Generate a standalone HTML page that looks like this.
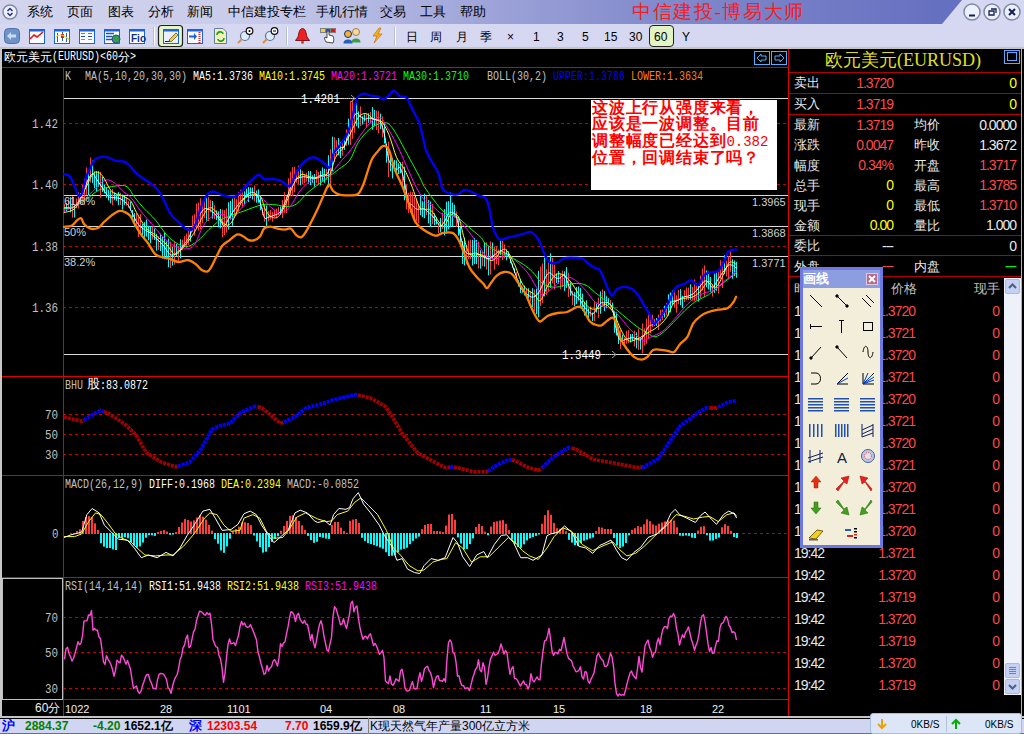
<!DOCTYPE html><html><head><meta charset="utf-8"><style>*{margin:0;padding:0;box-sizing:border-box}
html,body{width:1024px;height:734px;overflow:hidden;background:#000;font-family:"Liberation Sans",sans-serif;position:relative}
.a{position:absolute}
.t{position:absolute;white-space:nowrap;line-height:1}
#title{left:0;top:0;width:1024px;height:24px;background:linear-gradient(90deg,#d3d5ee 0px,#c8cbea 250px,#a4aadc 450px,#838bcc 650px,#6670c0 940px)}
#tb{left:0;top:24px;width:1024px;height:23px;background:#d6d8f2}
#sep{left:0;top:47px;width:1024px;height:2px;background:#c4c4c4}
.mn{top:5px;font-size:13px;color:#000}
.tf{top:31px;font-size:12px;color:#000}
.m{font-family:"Liberation Mono",monospace;font-size:12px;transform:scaleX(0.833);transform-origin:0 0}
.g{color:#c0c0c0}
.w{color:#fff}
.y{color:#ffff00}
.mg{color:#ff00ff}
.gr{color:#00ff00}
.bl{color:#0000ff}
.or{color:#ff8000}
.lab{font-size:11px;color:#c8c8c8;text-align:right}
.rp{font-size:13px}
#status{left:0;top:719px;width:1024px;height:14px;background:#d0d6f2}
</style></head><body>
<div id="title" class="a"></div>
<svg class="a" style="left:0;top:0" width="1024" height="24">
<polygon points="942,24 962,0 1024,0 1024,24" fill="#d6d8f2"/>
</svg>
<div id="tb" class="a"></div>
<div id="sep" class="a"></div>
<span class="t mn" style="left:27px">系统</span>
<span class="t mn" style="left:67px">页面</span>
<span class="t mn" style="left:108px">图表</span>
<span class="t mn" style="left:148px">分析</span>
<span class="t mn" style="left:187px">新闻</span>
<span class="t mn" style="left:228px">中信建投专栏</span>
<span class="t mn" style="left:316px">手机行情</span>
<span class="t mn" style="left:380px">交易</span>
<span class="t mn" style="left:420px">工具</span>
<span class="t mn" style="left:460px">帮助</span>
<span class="t" style="left:632px;top:2px;font-size:19px;letter-spacing:1.6px;color:#f02020;font-family:'Liberation Serif',serif">中信建投-博易大师</span>
<span class="t tf" style="left:406px">日</span>
<span class="t tf" style="left:430px">周</span>
<span class="t tf" style="left:456px">月</span>
<span class="t tf" style="left:480px">季</span>
<span class="t tf" style="left:507px">×</span>
<div class="a" style="left:649px;top:25px;width:25px;height:22px;border:1px solid #202020;border-radius:4px;background:#e2f4c4"></div>
<span class="t tf" style="left:533px">1</span>
<span class="t tf" style="left:557px">3</span>
<span class="t tf" style="left:582px">5</span>
<span class="t tf" style="left:604px">15</span>
<span class="t tf" style="left:629px">30</span>
<span class="t tf" style="left:654px">60</span>
<span class="t tf" style="left:682px">Y</span>

<svg class="a" style="left:0;top:0" width="1024" height="48">
<!-- menu circle -->
<circle cx="10" cy="12" r="7" fill="#eef0fa" stroke="#8088a8" stroke-width="1.5"/>
<path d="M7.5,11 L10,8.5 L12.5,11 M7.5,13 L10,15.5 L12.5,13" fill="none" stroke="#203080" stroke-width="1.5"/>
<!-- window buttons -->
<g stroke="#8088a8" stroke-width="1.5" fill="#eef0fc">
<circle cx="972" cy="12" r="8"/><circle cx="992" cy="12" r="8"/><circle cx="1012" cy="12" r="8"/>
</g>
<path d="M969,15.5 L975,15.5" stroke="#102050" stroke-width="2"/>
<path d="M989,11 h5 v4 h-5 z M991,9 h5 v4" fill="none" stroke="#102050" stroke-width="1.3"/>
<path d="M1009,9 L1015,15 M1015,9 L1009,15" stroke="#102050" stroke-width="2"/>
<!-- 1 back -->
<rect x="4.5" y="28.5" width="15" height="15" rx="4" fill="#6f93c8" stroke="#5070a8"/>
<path d="M7,36 L11,32 L11,34.5 L16,34.5 L16,37.5 L11,37.5 L11,40 Z" fill="#c8dcf4"/>
<!-- 2 chart -->
<rect x="29.5" y="29.5" width="15" height="14" fill="#fafcff" stroke="#1a64d8"/>
<rect x="29.5" y="29.5" width="15" height="2" fill="#1a64d8"/>
<path d="M30,39 L34,35 L37,37 L43,32" fill="none" stroke="#f01010" stroke-width="1.6"/>
<!-- 3 candle -->
<rect x="54.5" y="29.5" width="15" height="14" fill="#fafcff" stroke="#1a64d8"/>
<rect x="54.5" y="29.5" width="15" height="2" fill="#1a64d8"/>
<path d="M57.5,33 v9 M62.5,32 v9 M66.5,33 v9" stroke="#2060b0"/>
<rect x="61" y="34" width="3" height="4" fill="#f01010"/>
<path d="M55,38 C58,34 62,35 64,36 C66,37 68,38 69,40" fill="none" stroke="#f0e000" stroke-width="1.2"/>
<!-- 4 list -->
<rect x="79.5" y="29.5" width="15" height="14" fill="#fafcff" stroke="#1a64d8"/>
<rect x="79.5" y="29.5" width="15" height="2" fill="#1a64d8"/>
<path d="M81,33.5 h4 M88,33.5 h4" stroke="#40a040" stroke-width="1"/>
<path d="M81,36.5 h4 M88,36.5 h4" stroke="#2050b0" stroke-width="1"/>
<path d="M81,39.5 h4 M88,39.5 h4" stroke="#f07020" stroke-width="1"/>
<!-- 5 globe list -->
<rect x="104.5" y="29.5" width="15" height="14" fill="#fafcff" stroke="#1a64d8"/>
<rect x="104.5" y="29.5" width="15" height="2" fill="#1a64d8"/>
<path d="M106,33.5 h8 M106,36.5 h6 M106,39.5 h6" stroke="#2050b0" stroke-width="1.5"/>
<circle cx="116" cy="39" r="4" fill="#30a050" stroke="#205090"/>
<!-- 6 Fio -->
<rect x="129.5" y="29.5" width="15" height="14" fill="#fafcff" stroke="#1a64d8"/>
<rect x="129.5" y="29.5" width="15" height="2" fill="#1a64d8"/>
<text x="131" y="41.5" font-size="10" font-weight="bold" font-family="Liberation Sans" fill="#103080">Fio</text>
<!-- sep -->
<line x1="154.5" y1="27" x2="154.5" y2="45" stroke="#fff"/>
<line x1="153.5" y1="27" x2="153.5" y2="45" stroke="#b8bcd0"/>
<!-- 7 pencil selected -->
<rect x="158.5" y="25.5" width="24" height="21" rx="3" fill="#e2f6c8" stroke="#202020" stroke-width="1.2"/>
<rect x="163.5" y="29.5" width="15" height="14" fill="#e8f0ff" stroke="#1a64d8"/>
<rect x="163.5" y="29.5" width="15" height="2" fill="#1a64d8"/>
<path d="M165,41.5 L169,41.5 L176,34" fill="none" stroke="#102060" stroke-width="1.2"/>
<path d="M169,40 L176,33 L178,35 L171,42 Z" fill="#f0d040" stroke="#503000" stroke-width="0.6"/>
<!-- 8 arrow list -->
<rect x="187.5" y="29.5" width="15" height="14" fill="#fafcff" stroke="#1a64d8"/>
<rect x="187.5" y="29.5" width="15" height="2" fill="#1a64d8"/>
<path d="M189,36.5 h6" stroke="#1a64d8" stroke-width="2"/><path d="M194,33 L197,36.5 L194,40 Z" fill="#1a64d8"/>
<path d="M199.5,32 v11" stroke="#f02020" stroke-width="2" stroke-dasharray="1,1"/>
<!-- 9 doc refresh -->
<path d="M214.5,28.5 L223,28.5 L226.5,32 L226.5,43.5 L214.5,43.5 Z" fill="#f4f0b8" stroke="#6080a0"/>
<path d="M217,35 C217,31 223,31 223,34 M224,38 C224,42 218,42 218,39" fill="none" stroke="#20a020" stroke-width="1.6"/>
<!-- 10 zoom in -->
<circle cx="245" cy="36" r="4.5" fill="#d8ecff" stroke="#607080" stroke-width="1.2"/>
<path d="M241.5,39.5 L238,43" stroke="#e09040" stroke-width="2.2"/>
<circle cx="249.5" cy="31" r="3.3" fill="#fff" stroke="#101010" stroke-width="1.2"/>
<circle cx="249.5" cy="31" r="1" fill="#000"/>
<!-- 11 zoom out -->
<circle cx="270" cy="36" r="4.5" fill="#d8ecff" stroke="#607080" stroke-width="1.2"/>
<path d="M266.5,39.5 L263,43" stroke="#e09040" stroke-width="2.2"/>
<circle cx="274.5" cy="31" r="3.3" fill="#fff" stroke="#101010" stroke-width="1.2"/>
<path d="M273,31 h3" stroke="#000"/>
<!-- sep -->
<line x1="287.5" y1="27" x2="287.5" y2="45" stroke="#fff"/>
<line x1="286.5" y1="27" x2="286.5" y2="45" stroke="#b8bcd0"/>
<!-- 12 bell -->
<path d="M302.5,28.5 C299,29 299,33 298,37 L295.5,40.5 L309.5,40.5 L307,37 C306,33 306,29 302.5,28.5 Z" fill="#f02020" stroke="#600000" stroke-width="0.8"/>
<circle cx="302.5" cy="42.3" r="1.5" fill="#e03030"/>
<!-- 13 hand -->
<rect x="320" y="28" width="16" height="5" fill="#808080"/>
<rect x="321" y="29" width="4" height="3" fill="#f0d040"/><rect x="326" y="29" width="4" height="3" fill="#2060c0"/><rect x="331" y="29" width="4" height="3" fill="#f01010"/>
<path d="M327,31 L327,38 L325,37 C324,38 325,40 326,42 L333,43 C334,41 334,38 333,36 L329,35 L329,31 Z" fill="#fff" stroke="#202020" stroke-width="0.8"/>
<!-- 14 people -->
<circle cx="348" cy="34" r="3.5" fill="#f0b040" stroke="#203060"/>
<path d="M343.5,43.5 C343,38 353,38 352.5,43.5 Z" fill="#2060c0"/>
<circle cx="356" cy="32" r="3.5" fill="#f8d8a0" stroke="#a08040"/>
<path d="M351.5,42.5 C351,37 361,37 360.5,42.5 Z" fill="#40a040"/>
<!-- 15 lightning -->
<path d="M379,28 L373,36 L377,36 L374,43 L382,34 L378,34 L381,28 Z" fill="#f8b010" stroke="#c06000" stroke-width="0.6"/>
<!-- sep -->
<line x1="395.5" y1="27" x2="395.5" y2="45" stroke="#fff"/>
<line x1="394.5" y1="27" x2="394.5" y2="45" stroke="#b8bcd0"/>
</svg>

<svg class="a" style="left:0;top:48px" width="1024" height="668" viewBox="0 48 1024 668"><line x1="2" y1="67.5" x2="788" y2="67.5" stroke="#e00000" stroke-width="1"/><line x1="2" y1="376.5" x2="788" y2="376.5" stroke="#e00000" stroke-width="1"/><line x1="2" y1="475.5" x2="788" y2="475.5" stroke="#e00000" stroke-width="1"/><line x1="2" y1="577.5" x2="788" y2="577.5" stroke="#e00000" stroke-width="1"/><line x1="2" y1="699.5" x2="788" y2="699.5" stroke="#e00000" stroke-width="1"/><line x1="63.5" y1="67" x2="63.5" y2="716" stroke="#e00000" stroke-width="1"/><line x1="788.5" y1="49" x2="788.5" y2="716" stroke="#e00000" stroke-width="1"/><line x1="64" y1="123.5" x2="788" y2="123.5" stroke="#c80000" stroke-width="1" stroke-dasharray="3,3" stroke-dashoffset="1"/><line x1="64" y1="184.5" x2="788" y2="184.5" stroke="#c80000" stroke-width="1" stroke-dasharray="3,3" stroke-dashoffset="1"/><line x1="64" y1="246.5" x2="788" y2="246.5" stroke="#c80000" stroke-width="1" stroke-dasharray="3,3" stroke-dashoffset="1"/><line x1="64" y1="307.5" x2="788" y2="307.5" stroke="#c80000" stroke-width="1" stroke-dasharray="3,3" stroke-dashoffset="1"/><line x1="64" y1="98.5" x2="788" y2="98.5" stroke="#d8d8d8" stroke-width="1"/><line x1="64" y1="195.5" x2="788" y2="195.5" stroke="#d8d8d8" stroke-width="1"/><line x1="64" y1="226.5" x2="788" y2="226.5" stroke="#d8d8d8" stroke-width="1"/><line x1="64" y1="256.5" x2="788" y2="256.5" stroke="#d8d8d8" stroke-width="1"/><line x1="64" y1="354.5" x2="788" y2="354.5" stroke="#d8d8d8" stroke-width="1"/><line x1="64" y1="414.5" x2="788" y2="414.5" stroke="#c80000" stroke-width="1" stroke-dasharray="3,3" stroke-dashoffset="1"/><line x1="64" y1="434.5" x2="788" y2="434.5" stroke="#c80000" stroke-width="1" stroke-dasharray="3,3" stroke-dashoffset="1"/><line x1="64" y1="454.5" x2="788" y2="454.5" stroke="#c80000" stroke-width="1" stroke-dasharray="3,3" stroke-dashoffset="1"/><line x1="736" y1="533.5" x2="788" y2="533.5" stroke="#c80000" stroke-width="1" stroke-dasharray="3,3"/><line x1="64" y1="617.5" x2="788" y2="617.5" stroke="#c80000" stroke-width="1" stroke-dasharray="3,3" stroke-dashoffset="1"/><line x1="64" y1="652.5" x2="788" y2="652.5" stroke="#c80000" stroke-width="1" stroke-dasharray="3,3" stroke-dashoffset="1"/><line x1="64" y1="688.5" x2="788" y2="688.5" stroke="#c80000" stroke-width="1" stroke-dasharray="3,3" stroke-dashoffset="1"/><g stroke-width="1"><line x1="64.5" y1="203.9" x2="64.5" y2="212.9" stroke="#ff3c3c"/><line x1="66.5" y1="202.9" x2="66.5" y2="211.2" stroke="#00ffff"/><line x1="68.5" y1="199.2" x2="68.5" y2="209.3" stroke="#ff3c3c"/><line x1="70.5" y1="197.1" x2="70.5" y2="212.3" stroke="#00ffff"/><line x1="72.5" y1="196.3" x2="72.5" y2="217.7" stroke="#ff3c3c"/><line x1="74.5" y1="204.9" x2="74.5" y2="217.5" stroke="#00ffff"/><line x1="76.5" y1="198.4" x2="76.5" y2="208.2" stroke="#ff3c3c"/><line x1="78.5" y1="192.4" x2="78.5" y2="208.5" stroke="#ff3c3c"/><line x1="80.5" y1="193.1" x2="80.5" y2="203.0" stroke="#00ffff"/><line x1="82.5" y1="184.9" x2="82.5" y2="204.1" stroke="#ff3c3c"/><line x1="84.5" y1="178.7" x2="84.5" y2="204.8" stroke="#ff3c3c"/><line x1="86.5" y1="167.5" x2="86.5" y2="194.9" stroke="#ff3c3c"/><line x1="88.5" y1="170.6" x2="88.5" y2="196.1" stroke="#00ffff"/><line x1="90.5" y1="157.5" x2="90.5" y2="182.5" stroke="#ff3c3c"/><line x1="92.5" y1="160.6" x2="92.5" y2="183.1" stroke="#00ffff"/><line x1="94.5" y1="171.5" x2="94.5" y2="188.2" stroke="#00ffff"/><line x1="96.5" y1="171.1" x2="96.5" y2="191.4" stroke="#00ffff"/><line x1="98.5" y1="171.1" x2="98.5" y2="186.7" stroke="#00ffff"/><line x1="100.5" y1="171.9" x2="100.5" y2="197.8" stroke="#ff3c3c"/><line x1="102.5" y1="177.0" x2="102.5" y2="192.1" stroke="#00ffff"/><line x1="104.5" y1="184.5" x2="104.5" y2="193.4" stroke="#00ffff"/><line x1="106.5" y1="187.3" x2="106.5" y2="197.9" stroke="#00ffff"/><line x1="108.5" y1="189.8" x2="108.5" y2="200.5" stroke="#00ffff"/><line x1="110.5" y1="190.8" x2="110.5" y2="203.3" stroke="#00ffff"/><line x1="112.5" y1="189.0" x2="112.5" y2="205.4" stroke="#ff3c3c"/><line x1="114.5" y1="192.4" x2="114.5" y2="200.4" stroke="#00ffff"/><line x1="116.5" y1="194.3" x2="116.5" y2="200.8" stroke="#00ffff"/><line x1="118.5" y1="192.1" x2="118.5" y2="205.2" stroke="#00ffff"/><line x1="120.5" y1="192.9" x2="120.5" y2="205.0" stroke="#ff3c3c"/><line x1="122.5" y1="194.5" x2="122.5" y2="209.7" stroke="#00ffff"/><line x1="124.5" y1="195.6" x2="124.5" y2="204.9" stroke="#00ffff"/><line x1="126.5" y1="197.2" x2="126.5" y2="205.7" stroke="#ff3c3c"/><line x1="128.5" y1="201.2" x2="128.5" y2="207.8" stroke="#ff3c3c"/><line x1="130.5" y1="201.9" x2="130.5" y2="210.6" stroke="#00ffff"/><line x1="132.5" y1="210.0" x2="132.5" y2="219.3" stroke="#00ffff"/><line x1="134.5" y1="213.0" x2="134.5" y2="227.1" stroke="#00ffff"/><line x1="136.5" y1="213.4" x2="136.5" y2="226.2" stroke="#ff3c3c"/><line x1="138.5" y1="216.7" x2="138.5" y2="237.0" stroke="#ff3c3c"/><line x1="140.5" y1="213.9" x2="140.5" y2="233.2" stroke="#ff3c3c"/><line x1="142.5" y1="224.1" x2="142.5" y2="237.5" stroke="#00ffff"/><line x1="144.5" y1="222.1" x2="144.5" y2="237.8" stroke="#00ffff"/><line x1="146.5" y1="219.5" x2="146.5" y2="236.6" stroke="#00ffff"/><line x1="148.5" y1="225.9" x2="148.5" y2="240.3" stroke="#00ffff"/><line x1="150.5" y1="226.1" x2="150.5" y2="243.4" stroke="#00ffff"/><line x1="152.5" y1="226.4" x2="152.5" y2="239.6" stroke="#ff3c3c"/><line x1="154.5" y1="228.5" x2="154.5" y2="240.0" stroke="#00ffff"/><line x1="156.5" y1="233.9" x2="156.5" y2="250.6" stroke="#00ffff"/><line x1="158.5" y1="236.1" x2="158.5" y2="249.9" stroke="#ff3c3c"/><line x1="160.5" y1="233.7" x2="160.5" y2="251.1" stroke="#00ffff"/><line x1="162.5" y1="237.0" x2="162.5" y2="258.5" stroke="#00ffff"/><line x1="164.5" y1="232.5" x2="164.5" y2="259.2" stroke="#00ffff"/><line x1="166.5" y1="241.4" x2="166.5" y2="259.3" stroke="#00ffff"/><line x1="168.5" y1="238.6" x2="168.5" y2="267.3" stroke="#00ffff"/><line x1="170.5" y1="241.6" x2="170.5" y2="267.9" stroke="#ff3c3c"/><line x1="172.5" y1="246.8" x2="172.5" y2="265.6" stroke="#00ffff"/><line x1="174.5" y1="242.0" x2="174.5" y2="264.5" stroke="#ff3c3c"/><line x1="176.5" y1="243.8" x2="176.5" y2="256.8" stroke="#00ffff"/><line x1="178.5" y1="246.1" x2="178.5" y2="261.6" stroke="#ff3c3c"/><line x1="180.5" y1="239.3" x2="180.5" y2="258.4" stroke="#00ffff"/><line x1="182.5" y1="239.7" x2="182.5" y2="250.3" stroke="#ff3c3c"/><line x1="184.5" y1="236.1" x2="184.5" y2="246.8" stroke="#ff3c3c"/><line x1="186.5" y1="233.5" x2="186.5" y2="247.8" stroke="#ff3c3c"/><line x1="188.5" y1="227.7" x2="188.5" y2="244.8" stroke="#ff3c3c"/><line x1="190.5" y1="229.5" x2="190.5" y2="241.7" stroke="#00ffff"/><line x1="192.5" y1="215.5" x2="192.5" y2="231.8" stroke="#ff3c3c"/><line x1="194.5" y1="214.2" x2="194.5" y2="235.7" stroke="#ff3c3c"/><line x1="196.5" y1="203.6" x2="196.5" y2="227.9" stroke="#ff3c3c"/><line x1="198.5" y1="202.7" x2="198.5" y2="230.7" stroke="#ff3c3c"/><line x1="200.5" y1="198.3" x2="200.5" y2="229.2" stroke="#ff3c3c"/><line x1="202.5" y1="201.0" x2="202.5" y2="223.3" stroke="#ff3c3c"/><line x1="204.5" y1="198.5" x2="204.5" y2="218.1" stroke="#ff3c3c"/><line x1="206.5" y1="197.1" x2="206.5" y2="220.6" stroke="#00ffff"/><line x1="208.5" y1="197.1" x2="208.5" y2="221.1" stroke="#ff3c3c"/><line x1="210.5" y1="200.2" x2="210.5" y2="212.3" stroke="#ff3c3c"/><line x1="212.5" y1="201.0" x2="212.5" y2="218.7" stroke="#00ffff"/><line x1="214.5" y1="205.1" x2="214.5" y2="219.0" stroke="#ff3c3c"/><line x1="216.5" y1="210.4" x2="216.5" y2="220.1" stroke="#00ffff"/><line x1="218.5" y1="211.3" x2="218.5" y2="227.4" stroke="#00ffff"/><line x1="220.5" y1="209.0" x2="220.5" y2="228.4" stroke="#00ffff"/><line x1="222.5" y1="209.4" x2="222.5" y2="237.0" stroke="#ff3c3c"/><line x1="224.5" y1="210.2" x2="224.5" y2="235.2" stroke="#ff3c3c"/><line x1="226.5" y1="208.3" x2="226.5" y2="232.6" stroke="#ff3c3c"/><line x1="228.5" y1="202.3" x2="228.5" y2="229.6" stroke="#00ffff"/><line x1="230.5" y1="200.8" x2="230.5" y2="219.7" stroke="#00ffff"/><line x1="232.5" y1="198.6" x2="232.5" y2="225.8" stroke="#00ffff"/><line x1="234.5" y1="196.4" x2="234.5" y2="217.8" stroke="#ff3c3c"/><line x1="236.5" y1="199.1" x2="236.5" y2="215.4" stroke="#ff3c3c"/><line x1="238.5" y1="191.9" x2="238.5" y2="211.6" stroke="#ff3c3c"/><line x1="240.5" y1="189.7" x2="240.5" y2="203.6" stroke="#ff3c3c"/><line x1="242.5" y1="192.4" x2="242.5" y2="207.4" stroke="#ff3c3c"/><line x1="244.5" y1="191.4" x2="244.5" y2="204.1" stroke="#00ffff"/><line x1="246.5" y1="188.6" x2="246.5" y2="197.4" stroke="#00ffff"/><line x1="248.5" y1="187.1" x2="248.5" y2="202.1" stroke="#00ffff"/><line x1="250.5" y1="187.4" x2="250.5" y2="198.0" stroke="#00ffff"/><line x1="252.5" y1="187.6" x2="252.5" y2="199.5" stroke="#00ffff"/><line x1="254.5" y1="185.6" x2="254.5" y2="201.5" stroke="#ff3c3c"/><line x1="256.5" y1="190.5" x2="256.5" y2="202.6" stroke="#00ffff"/><line x1="258.5" y1="189.4" x2="258.5" y2="202.8" stroke="#00ffff"/><line x1="260.5" y1="195.2" x2="260.5" y2="210.2" stroke="#00ffff"/><line x1="262.5" y1="207.5" x2="262.5" y2="215.2" stroke="#ff3c3c"/><line x1="264.5" y1="204.6" x2="264.5" y2="221.6" stroke="#ff3c3c"/><line x1="266.5" y1="205.6" x2="266.5" y2="226.2" stroke="#00ffff"/><line x1="268.5" y1="211.0" x2="268.5" y2="221.4" stroke="#ff3c3c"/><line x1="270.5" y1="210.0" x2="270.5" y2="219.6" stroke="#ff3c3c"/><line x1="272.5" y1="212.0" x2="272.5" y2="221.7" stroke="#ff3c3c"/><line x1="274.5" y1="209.6" x2="274.5" y2="217.0" stroke="#ff3c3c"/><line x1="276.5" y1="208.6" x2="276.5" y2="218.3" stroke="#ff3c3c"/><line x1="278.5" y1="207.2" x2="278.5" y2="215.0" stroke="#ff3c3c"/><line x1="280.5" y1="206.4" x2="280.5" y2="214.8" stroke="#00ffff"/><line x1="282.5" y1="200.1" x2="282.5" y2="218.0" stroke="#ff3c3c"/><line x1="284.5" y1="192.2" x2="284.5" y2="212.9" stroke="#ff3c3c"/><line x1="286.5" y1="196.4" x2="286.5" y2="213.0" stroke="#ff3c3c"/><line x1="288.5" y1="178.3" x2="288.5" y2="205.7" stroke="#ff3c3c"/><line x1="290.5" y1="171.7" x2="290.5" y2="196.4" stroke="#ff3c3c"/><line x1="292.5" y1="167.1" x2="292.5" y2="196.3" stroke="#ff3c3c"/><line x1="294.5" y1="166.7" x2="294.5" y2="192.3" stroke="#ff3c3c"/><line x1="296.5" y1="172.3" x2="296.5" y2="182.7" stroke="#ff3c3c"/><line x1="298.5" y1="165.6" x2="298.5" y2="184.4" stroke="#ff3c3c"/><line x1="300.5" y1="169.3" x2="300.5" y2="185.4" stroke="#00ffff"/><line x1="302.5" y1="170.8" x2="302.5" y2="184.4" stroke="#ff3c3c"/><line x1="304.5" y1="174.7" x2="304.5" y2="183.0" stroke="#ff3c3c"/><line x1="306.5" y1="172.7" x2="306.5" y2="181.6" stroke="#ff3c3c"/><line x1="308.5" y1="171.1" x2="308.5" y2="183.7" stroke="#00ffff"/><line x1="310.5" y1="171.0" x2="310.5" y2="185.1" stroke="#00ffff"/><line x1="312.5" y1="175.3" x2="312.5" y2="182.8" stroke="#00ffff"/><line x1="314.5" y1="174.0" x2="314.5" y2="186.7" stroke="#00ffff"/><line x1="316.5" y1="170.1" x2="316.5" y2="183.1" stroke="#ff3c3c"/><line x1="318.5" y1="171.9" x2="318.5" y2="184.4" stroke="#ff3c3c"/><line x1="320.5" y1="170.8" x2="320.5" y2="185.4" stroke="#00ffff"/><line x1="322.5" y1="167.4" x2="322.5" y2="180.8" stroke="#00ffff"/><line x1="324.5" y1="168.8" x2="324.5" y2="182.9" stroke="#00ffff"/><line x1="326.5" y1="168.8" x2="326.5" y2="180.3" stroke="#ff3c3c"/><line x1="328.5" y1="155.2" x2="328.5" y2="187.5" stroke="#00ffff"/><line x1="330.5" y1="149.2" x2="330.5" y2="185.0" stroke="#ff3c3c"/><line x1="332.5" y1="136.6" x2="332.5" y2="171.1" stroke="#00ffff"/><line x1="334.5" y1="137.2" x2="334.5" y2="162.1" stroke="#ff3c3c"/><line x1="336.5" y1="140.3" x2="336.5" y2="156.3" stroke="#ff3c3c"/><line x1="338.5" y1="138.1" x2="338.5" y2="155.4" stroke="#00ffff"/><line x1="340.5" y1="141.9" x2="340.5" y2="158.0" stroke="#00ffff"/><line x1="342.5" y1="140.9" x2="342.5" y2="155.7" stroke="#ff3c3c"/><line x1="344.5" y1="140.1" x2="344.5" y2="149.9" stroke="#00ffff"/><line x1="346.5" y1="129.5" x2="346.5" y2="146.2" stroke="#ff3c3c"/><line x1="348.5" y1="118.6" x2="348.5" y2="144.8" stroke="#00ffff"/><line x1="350.5" y1="100.9" x2="350.5" y2="144.8" stroke="#ff3c3c"/><line x1="352.5" y1="99.5" x2="352.5" y2="138.8" stroke="#ff3c3c"/><line x1="354.5" y1="110.4" x2="354.5" y2="132.8" stroke="#ff3c3c"/><line x1="356.5" y1="100.6" x2="356.5" y2="126.3" stroke="#00ffff"/><line x1="358.5" y1="111.4" x2="358.5" y2="128.3" stroke="#00ffff"/><line x1="360.5" y1="106.4" x2="360.5" y2="126.1" stroke="#ff3c3c"/><line x1="362.5" y1="116.2" x2="362.5" y2="124.5" stroke="#00ffff"/><line x1="364.5" y1="114.4" x2="364.5" y2="121.4" stroke="#00ffff"/><line x1="366.5" y1="114.2" x2="366.5" y2="127.4" stroke="#ff3c3c"/><line x1="368.5" y1="113.3" x2="368.5" y2="122.7" stroke="#00ffff"/><line x1="370.5" y1="112.0" x2="370.5" y2="122.9" stroke="#ff3c3c"/><line x1="372.5" y1="107.1" x2="372.5" y2="129.7" stroke="#00ffff"/><line x1="374.5" y1="110.0" x2="374.5" y2="126.2" stroke="#00ffff"/><line x1="376.5" y1="110.6" x2="376.5" y2="130.0" stroke="#ff3c3c"/><line x1="378.5" y1="110.9" x2="378.5" y2="133.2" stroke="#ff3c3c"/><line x1="380.5" y1="113.6" x2="380.5" y2="129.2" stroke="#00ffff"/><line x1="382.5" y1="116.5" x2="382.5" y2="137.4" stroke="#ff3c3c"/><line x1="384.5" y1="123.2" x2="384.5" y2="143.5" stroke="#00ffff"/><line x1="386.5" y1="143.8" x2="386.5" y2="162.7" stroke="#00ffff"/><line x1="388.5" y1="141.8" x2="388.5" y2="177.0" stroke="#ff3c3c"/><line x1="390.5" y1="152.6" x2="390.5" y2="171.2" stroke="#00ffff"/><line x1="392.5" y1="158.1" x2="392.5" y2="178.4" stroke="#00ffff"/><line x1="394.5" y1="159.9" x2="394.5" y2="171.2" stroke="#00ffff"/><line x1="396.5" y1="160.3" x2="396.5" y2="174.6" stroke="#00ffff"/><line x1="398.5" y1="163.3" x2="398.5" y2="174.1" stroke="#00ffff"/><line x1="400.5" y1="162.4" x2="400.5" y2="173.1" stroke="#00ffff"/><line x1="402.5" y1="161.7" x2="402.5" y2="185.1" stroke="#ff3c3c"/><line x1="404.5" y1="166.8" x2="404.5" y2="200.3" stroke="#00ffff"/><line x1="406.5" y1="184.4" x2="406.5" y2="209.3" stroke="#ff3c3c"/><line x1="408.5" y1="192.7" x2="408.5" y2="212.9" stroke="#ff3c3c"/><line x1="410.5" y1="191.5" x2="410.5" y2="212.5" stroke="#ff3c3c"/><line x1="412.5" y1="192.1" x2="412.5" y2="213.8" stroke="#ff3c3c"/><line x1="414.5" y1="196.9" x2="414.5" y2="218.1" stroke="#ff3c3c"/><line x1="416.5" y1="198.6" x2="416.5" y2="221.4" stroke="#ff3c3c"/><line x1="418.5" y1="204.3" x2="418.5" y2="223.0" stroke="#ff3c3c"/><line x1="420.5" y1="194.5" x2="420.5" y2="215.3" stroke="#00ffff"/><line x1="422.5" y1="201.3" x2="422.5" y2="217.1" stroke="#00ffff"/><line x1="424.5" y1="193.7" x2="424.5" y2="218.1" stroke="#00ffff"/><line x1="426.5" y1="196.2" x2="426.5" y2="215.2" stroke="#ff3c3c"/><line x1="428.5" y1="199.9" x2="428.5" y2="223.4" stroke="#00ffff"/><line x1="430.5" y1="201.6" x2="430.5" y2="226.9" stroke="#00ffff"/><line x1="432.5" y1="204.0" x2="432.5" y2="224.3" stroke="#ff3c3c"/><line x1="434.5" y1="213.4" x2="434.5" y2="225.2" stroke="#00ffff"/><line x1="436.5" y1="217.2" x2="436.5" y2="224.4" stroke="#00ffff"/><line x1="438.5" y1="223.2" x2="438.5" y2="232.9" stroke="#ff3c3c"/><line x1="440.5" y1="218.1" x2="440.5" y2="232.3" stroke="#00ffff"/><line x1="442.5" y1="212.5" x2="442.5" y2="229.0" stroke="#ff3c3c"/><line x1="444.5" y1="209.1" x2="444.5" y2="235.4" stroke="#00ffff"/><line x1="446.5" y1="201.7" x2="446.5" y2="233.3" stroke="#00ffff"/><line x1="448.5" y1="201.2" x2="448.5" y2="229.3" stroke="#00ffff"/><line x1="450.5" y1="192.4" x2="450.5" y2="226.7" stroke="#00ffff"/><line x1="452.5" y1="202.6" x2="452.5" y2="226.6" stroke="#00ffff"/><line x1="454.5" y1="204.8" x2="454.5" y2="217.5" stroke="#00ffff"/><line x1="456.5" y1="211.6" x2="456.5" y2="226.7" stroke="#ff3c3c"/><line x1="458.5" y1="216.4" x2="458.5" y2="235.7" stroke="#00ffff"/><line x1="460.5" y1="227.0" x2="460.5" y2="245.3" stroke="#00ffff"/><line x1="462.5" y1="241.1" x2="462.5" y2="263.9" stroke="#00ffff"/><line x1="464.5" y1="237.7" x2="464.5" y2="265.5" stroke="#00ffff"/><line x1="466.5" y1="244.9" x2="466.5" y2="264.4" stroke="#ff3c3c"/><line x1="468.5" y1="240.5" x2="468.5" y2="259.0" stroke="#ff3c3c"/><line x1="470.5" y1="239.7" x2="470.5" y2="259.1" stroke="#ff3c3c"/><line x1="472.5" y1="239.8" x2="472.5" y2="265.5" stroke="#00ffff"/><line x1="474.5" y1="238.0" x2="474.5" y2="263.9" stroke="#00ffff"/><line x1="476.5" y1="240.0" x2="476.5" y2="264.1" stroke="#00ffff"/><line x1="478.5" y1="241.6" x2="478.5" y2="268.4" stroke="#ff3c3c"/><line x1="480.5" y1="250.3" x2="480.5" y2="268.7" stroke="#00ffff"/><line x1="482.5" y1="251.7" x2="482.5" y2="266.2" stroke="#ff3c3c"/><line x1="484.5" y1="242.7" x2="484.5" y2="266.6" stroke="#00ffff"/><line x1="486.5" y1="242.3" x2="486.5" y2="269.5" stroke="#ff3c3c"/><line x1="488.5" y1="246.2" x2="488.5" y2="275.4" stroke="#00ffff"/><line x1="490.5" y1="241.4" x2="490.5" y2="274.6" stroke="#ff3c3c"/><line x1="492.5" y1="242.5" x2="492.5" y2="259.6" stroke="#00ffff"/><line x1="494.5" y1="246.5" x2="494.5" y2="269.8" stroke="#ff3c3c"/><line x1="496.5" y1="246.2" x2="496.5" y2="264.3" stroke="#ff3c3c"/><line x1="498.5" y1="249.3" x2="498.5" y2="265.1" stroke="#ff3c3c"/><line x1="500.5" y1="240.3" x2="500.5" y2="254.9" stroke="#00ffff"/><line x1="502.5" y1="240.6" x2="502.5" y2="260.0" stroke="#ff3c3c"/><line x1="504.5" y1="244.4" x2="504.5" y2="258.5" stroke="#ff3c3c"/><line x1="506.5" y1="249.3" x2="506.5" y2="260.3" stroke="#00ffff"/><line x1="508.5" y1="251.4" x2="508.5" y2="257.4" stroke="#00ffff"/><line x1="510.5" y1="258.9" x2="510.5" y2="262.9" stroke="#00ffff"/><line x1="512.5" y1="263.6" x2="512.5" y2="267.7" stroke="#00ffff"/><line x1="514.5" y1="268.4" x2="514.5" y2="272.9" stroke="#00ffff"/><line x1="516.5" y1="272.3" x2="516.5" y2="281.5" stroke="#ff3c3c"/><line x1="518.5" y1="280.3" x2="518.5" y2="286.5" stroke="#00ffff"/><line x1="520.5" y1="279.8" x2="520.5" y2="292.9" stroke="#00ffff"/><line x1="522.5" y1="287.2" x2="522.5" y2="292.8" stroke="#00ffff"/><line x1="524.5" y1="285.6" x2="524.5" y2="295.5" stroke="#00ffff"/><line x1="526.5" y1="288.3" x2="526.5" y2="296.4" stroke="#ff3c3c"/><line x1="528.5" y1="288.3" x2="528.5" y2="298.4" stroke="#00ffff"/><line x1="530.5" y1="290.7" x2="530.5" y2="301.6" stroke="#ff3c3c"/><line x1="532.5" y1="288.3" x2="532.5" y2="307.1" stroke="#00ffff"/><line x1="534.5" y1="289.5" x2="534.5" y2="311.3" stroke="#ff3c3c"/><line x1="536.5" y1="288.7" x2="536.5" y2="314.3" stroke="#00ffff"/><line x1="538.5" y1="270.8" x2="538.5" y2="317.3" stroke="#00ffff"/><line x1="540.5" y1="266.6" x2="540.5" y2="306.0" stroke="#ff3c3c"/><line x1="542.5" y1="263.4" x2="542.5" y2="303.0" stroke="#ff3c3c"/><line x1="544.5" y1="257.7" x2="544.5" y2="296.4" stroke="#00ffff"/><line x1="546.5" y1="269.2" x2="546.5" y2="295.0" stroke="#ff3c3c"/><line x1="548.5" y1="260.6" x2="548.5" y2="291.1" stroke="#ff3c3c"/><line x1="550.5" y1="253.2" x2="550.5" y2="287.9" stroke="#00ffff"/><line x1="552.5" y1="257.7" x2="552.5" y2="283.5" stroke="#ff3c3c"/><line x1="554.5" y1="264.6" x2="554.5" y2="289.3" stroke="#ff3c3c"/><line x1="556.5" y1="273.4" x2="556.5" y2="283.1" stroke="#00ffff"/><line x1="558.5" y1="271.1" x2="558.5" y2="283.8" stroke="#00ffff"/><line x1="560.5" y1="273.8" x2="560.5" y2="289.3" stroke="#ff3c3c"/><line x1="562.5" y1="270.7" x2="562.5" y2="287.1" stroke="#ff3c3c"/><line x1="564.5" y1="271.3" x2="564.5" y2="290.9" stroke="#00ffff"/><line x1="566.5" y1="267.1" x2="566.5" y2="288.0" stroke="#00ffff"/><line x1="568.5" y1="272.7" x2="568.5" y2="297.0" stroke="#ff3c3c"/><line x1="570.5" y1="282.3" x2="570.5" y2="295.8" stroke="#00ffff"/><line x1="572.5" y1="290.9" x2="572.5" y2="305.1" stroke="#ff3c3c"/><line x1="574.5" y1="292.1" x2="574.5" y2="306.3" stroke="#00ffff"/><line x1="576.5" y1="287.0" x2="576.5" y2="304.1" stroke="#00ffff"/><line x1="578.5" y1="286.5" x2="578.5" y2="300.6" stroke="#00ffff"/><line x1="580.5" y1="288.1" x2="580.5" y2="308.1" stroke="#00ffff"/><line x1="582.5" y1="293.6" x2="582.5" y2="310.9" stroke="#00ffff"/><line x1="584.5" y1="303.0" x2="584.5" y2="315.6" stroke="#00ffff"/><line x1="586.5" y1="300.3" x2="586.5" y2="313.8" stroke="#00ffff"/><line x1="588.5" y1="308.4" x2="588.5" y2="319.7" stroke="#00ffff"/><line x1="590.5" y1="306.3" x2="590.5" y2="316.6" stroke="#ff3c3c"/><line x1="592.5" y1="312.5" x2="592.5" y2="321.1" stroke="#00ffff"/><line x1="594.5" y1="301.9" x2="594.5" y2="321.2" stroke="#ff3c3c"/><line x1="596.5" y1="303.7" x2="596.5" y2="312.6" stroke="#00ffff"/><line x1="598.5" y1="297.5" x2="598.5" y2="317.8" stroke="#ff3c3c"/><line x1="600.5" y1="291.4" x2="600.5" y2="313.8" stroke="#00ffff"/><line x1="602.5" y1="289.4" x2="602.5" y2="305.0" stroke="#ff3c3c"/><line x1="604.5" y1="290.9" x2="604.5" y2="311.0" stroke="#00ffff"/><line x1="606.5" y1="296.3" x2="606.5" y2="308.3" stroke="#00ffff"/><line x1="608.5" y1="298.2" x2="608.5" y2="305.3" stroke="#00ffff"/><line x1="610.5" y1="300.0" x2="610.5" y2="308.0" stroke="#ff3c3c"/><line x1="612.5" y1="302.6" x2="612.5" y2="311.7" stroke="#00ffff"/><line x1="614.5" y1="310.9" x2="614.5" y2="332.7" stroke="#00ffff"/><line x1="616.5" y1="312.4" x2="616.5" y2="335.5" stroke="#00ffff"/><line x1="618.5" y1="327.1" x2="618.5" y2="344.0" stroke="#00ffff"/><line x1="620.5" y1="330.3" x2="620.5" y2="348.9" stroke="#ff3c3c"/><line x1="622.5" y1="334.5" x2="622.5" y2="344.4" stroke="#00ffff"/><line x1="624.5" y1="337.9" x2="624.5" y2="344.5" stroke="#ff3c3c"/><line x1="626.5" y1="330.9" x2="626.5" y2="343.7" stroke="#ff3c3c"/><line x1="628.5" y1="330.0" x2="628.5" y2="343.0" stroke="#ff3c3c"/><line x1="630.5" y1="334.0" x2="630.5" y2="342.6" stroke="#00ffff"/><line x1="632.5" y1="333.8" x2="632.5" y2="340.8" stroke="#00ffff"/><line x1="634.5" y1="330.6" x2="634.5" y2="346.6" stroke="#ff3c3c"/><line x1="636.5" y1="332.3" x2="636.5" y2="348.4" stroke="#00ffff"/><line x1="638.5" y1="328.4" x2="638.5" y2="350.1" stroke="#ff3c3c"/><line x1="640.5" y1="337.8" x2="640.5" y2="349.6" stroke="#00ffff"/><line x1="642.5" y1="323.4" x2="642.5" y2="353.4" stroke="#ff3c3c"/><line x1="644.5" y1="328.4" x2="644.5" y2="345.6" stroke="#ff3c3c"/><line x1="646.5" y1="318.6" x2="646.5" y2="343.8" stroke="#ff3c3c"/><line x1="648.5" y1="313.7" x2="648.5" y2="338.1" stroke="#ff3c3c"/><line x1="650.5" y1="315.1" x2="650.5" y2="333.2" stroke="#ff3c3c"/><line x1="652.5" y1="314.8" x2="652.5" y2="327.2" stroke="#ff3c3c"/><line x1="654.5" y1="318.9" x2="654.5" y2="326.3" stroke="#ff3c3c"/><line x1="656.5" y1="318.1" x2="656.5" y2="325.8" stroke="#00ffff"/><line x1="658.5" y1="314.5" x2="658.5" y2="330.1" stroke="#ff3c3c"/><line x1="660.5" y1="309.9" x2="660.5" y2="321.7" stroke="#ff3c3c"/><line x1="662.5" y1="309.6" x2="662.5" y2="320.2" stroke="#ff3c3c"/><line x1="664.5" y1="305.7" x2="664.5" y2="317.6" stroke="#00ffff"/><line x1="666.5" y1="302.8" x2="666.5" y2="315.5" stroke="#ff3c3c"/><line x1="668.5" y1="294.3" x2="668.5" y2="315.6" stroke="#00ffff"/><line x1="670.5" y1="292.5" x2="670.5" y2="312.3" stroke="#00ffff"/><line x1="672.5" y1="290.5" x2="672.5" y2="305.1" stroke="#00ffff"/><line x1="674.5" y1="288.2" x2="674.5" y2="307.7" stroke="#ff3c3c"/><line x1="676.5" y1="295.4" x2="676.5" y2="312.6" stroke="#ff3c3c"/><line x1="678.5" y1="290.0" x2="678.5" y2="304.1" stroke="#ff3c3c"/><line x1="680.5" y1="289.2" x2="680.5" y2="305.2" stroke="#00ffff"/><line x1="682.5" y1="295.7" x2="682.5" y2="307.8" stroke="#00ffff"/><line x1="684.5" y1="290.2" x2="684.5" y2="302.1" stroke="#ff3c3c"/><line x1="686.5" y1="287.5" x2="686.5" y2="300.3" stroke="#ff3c3c"/><line x1="688.5" y1="287.6" x2="688.5" y2="300.1" stroke="#ff3c3c"/><line x1="690.5" y1="284.3" x2="690.5" y2="299.8" stroke="#00ffff"/><line x1="692.5" y1="286.8" x2="692.5" y2="300.7" stroke="#ff3c3c"/><line x1="694.5" y1="279.5" x2="694.5" y2="301.1" stroke="#ff3c3c"/><line x1="696.5" y1="283.1" x2="696.5" y2="300.1" stroke="#ff3c3c"/><line x1="698.5" y1="285.5" x2="698.5" y2="301.6" stroke="#00ffff"/><line x1="700.5" y1="275.6" x2="700.5" y2="298.1" stroke="#ff3c3c"/><line x1="702.5" y1="268.5" x2="702.5" y2="290.5" stroke="#ff3c3c"/><line x1="704.5" y1="265.4" x2="704.5" y2="297.2" stroke="#ff3c3c"/><line x1="706.5" y1="270.4" x2="706.5" y2="287.3" stroke="#00ffff"/><line x1="708.5" y1="271.6" x2="708.5" y2="289.5" stroke="#00ffff"/><line x1="710.5" y1="277.0" x2="710.5" y2="292.2" stroke="#00ffff"/><line x1="712.5" y1="284.0" x2="712.5" y2="296.6" stroke="#ff3c3c"/><line x1="714.5" y1="273.6" x2="714.5" y2="292.9" stroke="#00ffff"/><line x1="716.5" y1="271.4" x2="716.5" y2="290.7" stroke="#00ffff"/><line x1="718.5" y1="269.7" x2="718.5" y2="293.5" stroke="#ff3c3c"/><line x1="720.5" y1="260.2" x2="720.5" y2="279.0" stroke="#ff3c3c"/><line x1="722.5" y1="261.8" x2="722.5" y2="288.0" stroke="#ff3c3c"/><line x1="724.5" y1="255.2" x2="724.5" y2="274.2" stroke="#00ffff"/><line x1="726.5" y1="260.7" x2="726.5" y2="276.4" stroke="#ff3c3c"/><line x1="728.5" y1="255.9" x2="728.5" y2="279.3" stroke="#ff3c3c"/><line x1="730.5" y1="250.8" x2="730.5" y2="271.8" stroke="#ff3c3c"/><line x1="732.5" y1="259.2" x2="732.5" y2="278.8" stroke="#00ffff"/><line x1="734.5" y1="260.5" x2="734.5" y2="276.1" stroke="#00ffff"/><line x1="736.5" y1="261.9" x2="736.5" y2="277.8" stroke="#00ffff"/></g><path d="M64.0,208.6 C65.9,208.1 71.6,207.4 75.4,205.8 C79.2,204.2 83.4,201.5 86.9,199.1 C90.4,196.7 93.2,193.4 96.4,191.5 C99.6,189.6 102.5,188.6 106.0,187.7 C109.5,186.8 113.9,186.0 117.4,185.8 C120.9,185.6 124.1,184.8 127.0,186.7 C129.9,188.6 131.8,193.5 134.6,197.2 C137.4,200.8 140.6,204.8 144.1,208.6 C147.6,212.4 151.7,215.6 155.5,220.1 C159.3,224.6 163.5,231.5 167.0,235.3 C170.5,239.1 173.3,241.1 176.5,243.0 C179.7,244.9 182.5,247.1 186.0,246.8 C189.5,246.5 193.7,244.0 197.5,241.1 C201.3,238.2 205.1,233.1 208.9,229.6 C212.7,226.1 216.6,222.5 220.4,220.1 C224.2,217.7 227.9,216.8 231.8,215.3 C235.7,213.8 239.0,212.8 244.0,211.0 C249.0,209.2 256.8,205.8 262.0,204.8 C267.2,203.8 271.3,204.5 275.5,204.8 C279.7,205.1 283.5,206.8 287.0,206.7 C290.5,206.5 293.0,206.3 296.5,203.9 C300.0,201.5 303.6,196.2 308.0,192.4 C312.4,188.6 317.9,184.8 323.0,181.0 C328.1,177.2 333.9,173.0 338.4,169.5 C342.9,166.0 346.6,164.6 349.9,160.0 C353.2,155.4 355.1,147.4 358.4,142.2 C361.7,137.0 366.1,132.1 369.9,128.9 C373.7,125.7 378.1,123.9 381.3,123.1 C384.5,122.3 386.3,122.2 388.9,124.1 C391.4,126.0 393.4,129.3 396.6,134.6 C399.8,139.8 404.2,148.6 408.0,155.6 C411.8,162.6 416.7,171.4 419.4,176.5 C422.1,181.6 421.6,182.3 424.0,186.2 C426.4,190.0 430.0,195.1 433.5,199.6 C437.0,204.1 441.2,210.1 445.0,212.9 C448.8,215.8 452.6,214.5 456.4,216.7 C460.2,218.9 463.8,222.8 467.9,226.3 C472.0,229.8 478.3,234.9 481.2,237.7 C484.1,240.5 482.4,241.1 485.0,243.3 C487.6,245.5 492.4,248.8 496.5,251.0 C500.6,253.2 505.4,254.5 509.8,256.7 C514.2,258.9 519.4,261.8 523.2,264.3 C527.0,266.9 529.5,268.8 532.7,272.0 C535.9,275.2 538.7,280.9 542.2,283.4 C545.7,285.9 549.9,286.9 553.7,287.2 C557.5,287.5 561.3,285.9 565.1,285.3 C568.9,284.7 573.1,283.4 576.6,283.4 C580.1,283.4 582.9,283.7 586.1,285.3 C589.3,286.9 592.4,290.3 595.6,292.9 C598.8,295.4 601.9,297.7 605.4,300.6 C608.9,303.5 613.1,306.9 616.9,310.1 C620.7,313.3 624.8,316.7 628.3,319.6 C631.8,322.5 634.7,325.1 637.9,327.3 C641.1,329.5 644.5,331.4 647.4,333.0 C650.2,334.6 652.1,337.1 655.0,336.8 C657.9,336.5 661.1,334.0 664.6,331.1 C668.1,328.2 672.2,323.4 676.0,319.6 C679.8,315.8 683.9,311.4 687.4,308.2 C690.9,305.0 693.5,302.8 697.0,300.6 C700.5,298.4 704.9,297.0 708.4,294.8 C711.9,292.6 714.8,289.7 718.0,287.2 C721.2,284.7 724.5,282.0 727.5,279.6 C730.5,277.2 734.7,274.0 736.1,272.9" fill="none" stroke="#00ff00" stroke-width="1" stroke-linejoin="round" stroke-linecap="round"/><path d="M64.0,210.6 C65.9,209.8 72.2,207.4 75.4,205.8 C78.6,204.2 80.1,203.4 83.0,201.0 C85.9,198.6 89.4,194.7 92.6,191.5 C95.8,188.3 99.4,183.9 102.1,182.0 C104.8,180.1 106.6,179.7 108.8,180.0 C111.0,180.3 113.1,182.0 115.5,183.9 C117.9,185.8 120.6,189.3 123.1,191.5 C125.6,193.7 127.8,194.0 130.7,197.2 C133.6,200.4 136.8,206.1 140.3,210.6 C143.8,215.1 147.9,219.4 151.7,223.9 C155.5,228.4 159.7,233.8 163.2,237.3 C166.7,240.8 169.5,243.0 172.7,244.9 C175.9,246.8 178.7,248.5 182.2,248.7 C185.7,248.8 190.2,249.6 193.7,245.8 C197.2,242.0 200.0,230.7 203.2,225.8 C206.4,220.9 209.5,218.2 212.7,216.3 C215.9,214.4 219.1,214.1 222.3,214.4 C225.5,214.7 228.2,219.8 231.8,218.2 C235.4,216.6 240.4,209.1 244.0,205.0 C247.6,200.9 250.6,194.9 253.5,193.7 C256.4,192.4 258.3,195.3 261.2,197.5 C264.1,199.7 267.5,204.4 270.7,207.0 C273.9,209.6 277.0,212.8 280.2,212.8 C283.4,212.8 286.6,210.5 289.8,207.0 C293.0,203.5 296.1,195.9 299.3,191.8 C302.5,187.7 305.3,184.9 308.8,182.3 C312.3,179.8 316.8,177.8 320.3,176.5 C323.8,175.2 326.6,176.8 329.8,174.6 C333.0,172.4 335.8,167.3 339.3,163.2 C342.8,159.1 347.0,154.9 350.8,149.8 C354.6,144.7 358.4,137.8 362.2,132.7 C366.0,127.6 370.5,121.7 373.7,119.3 C376.9,116.9 379.1,117.1 381.3,118.4 C383.5,119.7 384.4,122.7 387.0,127.0 C389.6,131.3 393.4,137.8 396.6,144.1 C399.8,150.4 402.9,158.1 406.1,165.1 C409.3,172.1 412.6,180.3 415.6,186.1 C418.6,191.8 421.3,196.4 424.0,199.6 C426.7,202.8 428.4,202.8 431.6,205.3 C434.8,207.8 439.3,212.9 443.1,214.8 C446.9,216.7 450.7,214.5 454.5,216.7 C458.3,218.9 462.2,223.8 466.0,228.2 C469.8,232.6 473.9,238.6 477.4,243.4 C480.9,248.2 483.7,254.2 486.9,256.8 C490.1,259.4 493.0,259.0 496.5,258.7 C500.0,258.4 504.7,254.6 507.9,254.9 C511.1,255.2 512.3,257.6 515.5,260.5 C518.7,263.4 523.5,267.6 527.0,272.0 C530.5,276.4 534.0,283.4 536.5,287.2 C539.0,291.0 539.3,294.8 542.2,294.8 C545.1,294.8 549.9,290.1 553.7,287.2 C557.5,284.3 561.6,279.0 565.1,277.7 C568.6,276.4 571.1,277.4 574.6,279.6 C578.1,281.8 582.6,287.2 586.1,291.0 C589.6,294.8 591.7,299.6 595.6,302.5 C599.5,305.4 605.4,306.0 609.3,308.2 C613.2,310.4 615.6,312.6 618.8,315.8 C622.0,319.0 625.1,323.8 628.3,327.3 C631.5,330.8 635.3,334.6 637.9,336.8 C640.5,339.0 641.4,340.6 643.6,340.6 C645.8,340.6 648.0,338.4 651.2,336.8 C654.4,335.2 658.9,334.0 662.7,331.1 C666.5,328.2 670.3,323.7 674.1,319.6 C677.9,315.5 682.0,310.0 685.5,306.3 C689.0,302.6 691.9,299.9 695.1,297.7 C698.3,295.5 701.4,294.2 704.6,292.9 C707.8,291.6 710.9,292.0 714.1,290.1 C717.3,288.2 720.8,283.9 723.7,281.5 C726.6,279.1 729.2,277.6 731.3,275.8 C733.4,274.1 735.3,271.8 736.1,271.0" fill="none" stroke="#ff00ff" stroke-width="1" stroke-linejoin="round" stroke-linecap="round"/><path d="M64.0,212.5 C65.9,211.8 71.9,211.8 75.4,208.0 C78.9,204.2 82.1,195.2 85.0,189.6 C87.9,184.0 90.4,177.2 92.6,174.3 C94.8,171.4 96.4,171.8 98.3,172.4 C100.2,173.0 101.8,174.9 104.0,178.1 C106.2,181.3 108.8,188.6 111.7,191.5 C114.6,194.4 118.0,193.7 121.2,195.3 C124.4,196.9 128.1,198.1 130.7,201.0 C133.2,203.9 133.9,208.1 136.5,212.5 C139.1,216.9 142.8,223.9 146.0,227.7 C149.2,231.5 152.0,232.4 155.5,235.3 C159.0,238.2 163.8,241.7 167.0,244.9 C170.2,248.1 172.1,253.8 174.6,254.4 C177.1,255.0 179.0,252.2 182.2,248.7 C185.4,245.2 189.9,239.4 193.7,233.4 C197.5,227.4 202.2,216.8 205.1,212.5 C207.9,208.2 208.9,207.7 210.8,207.7 C212.7,207.7 214.4,209.8 216.6,212.5 C218.8,215.2 221.7,222.3 224.2,223.9 C226.7,225.5 228.5,226.2 231.8,222.0 C235.1,217.8 239.4,203.4 244.0,199.0 C248.6,194.6 255.8,193.9 259.3,195.6 C262.8,197.3 263.1,205.5 265.0,209.0 C266.9,212.5 268.5,215.3 270.7,216.6 C272.9,217.9 275.8,218.8 278.3,216.6 C280.9,214.4 283.4,208.6 286.0,203.2 C288.6,197.8 291.1,189.0 293.6,184.2 C296.1,179.4 298.7,175.9 301.2,174.6 C303.7,173.3 306.2,175.9 308.8,176.5 C311.4,177.1 313.9,178.7 316.5,178.4 C319.1,178.1 321.9,175.2 324.1,174.6 C326.3,174.0 327.9,177.4 329.8,174.6 C331.7,171.8 333.3,161.9 335.5,157.5 C337.7,153.1 340.6,152.0 343.2,147.9 C345.8,143.8 348.3,137.8 350.8,132.7 C353.3,127.6 355.9,120.6 358.4,117.4 C360.9,114.2 363.4,113.3 366.0,113.6 C368.6,113.9 371.1,118.0 373.7,119.3 C376.2,120.6 378.8,118.7 381.3,121.2 C383.8,123.8 386.3,128.5 388.9,134.6 C391.4,140.7 394.1,151.8 396.6,157.5 C399.2,163.2 401.7,164.1 404.2,168.9 C406.7,173.7 409.3,179.8 411.8,186.1 C414.3,192.4 417.4,203.2 419.4,207.0 C421.4,210.8 422.0,208.4 424.0,209.1 C426.0,209.8 428.4,208.1 431.6,211.0 C434.8,213.9 439.9,225.7 443.1,226.3 C446.3,226.9 448.2,216.4 450.7,214.8 C453.2,213.2 456.1,212.9 458.3,216.7 C460.5,220.5 462.1,231.5 464.0,237.7 C465.9,243.9 466.9,251.2 469.8,254.0 C472.7,256.9 477.4,253.7 481.2,254.8 C485.0,255.9 488.8,261.4 492.6,260.5 C496.4,259.6 500.6,248.8 504.1,249.1 C507.6,249.4 510.4,256.4 513.6,262.4 C516.8,268.4 519.7,279.9 523.2,285.3 C526.7,290.7 531.8,292.2 534.6,294.8 C537.5,297.4 538.1,302.2 540.3,300.6 C542.5,299.0 545.1,289.8 548.0,285.3 C550.9,280.9 554.0,274.8 557.5,273.9 C561.0,272.9 565.1,275.8 568.9,279.6 C572.7,283.4 576.9,291.9 580.4,296.7 C583.9,301.5 586.7,306.3 589.9,308.2 C593.1,310.1 596.8,308.8 599.4,308.2 C602.0,307.6 603.1,303.8 605.4,304.4 C607.7,305.0 610.5,307.9 613.1,312.0 C615.7,316.1 618.2,324.4 620.7,329.2 C623.2,334.0 625.4,339.0 628.3,340.6 C631.2,342.2 634.7,340.0 637.9,338.7 C641.1,337.4 644.2,334.9 647.4,333.0 C650.6,331.1 653.7,329.9 656.9,327.3 C660.1,324.8 663.6,321.8 666.5,317.7 C669.4,313.6 671.2,305.7 674.1,302.5 C677.0,299.3 680.4,299.6 683.6,298.6 C686.8,297.6 690.3,298.0 693.2,296.7 C696.1,295.4 698.3,293.5 700.8,291.0 C703.3,288.5 705.9,282.1 708.4,281.5 C710.9,280.9 713.5,288.5 716.0,287.2 C718.5,285.9 721.5,278.0 723.7,273.9 C725.9,269.8 727.3,264.0 729.4,262.4 C731.5,260.8 735.0,264.0 736.1,264.3" fill="none" stroke="#ffff00" stroke-width="1" stroke-linejoin="round" stroke-linecap="round"/><path d="M64.5,207.8 C65.2,207.8 67.2,207.9 68.5,208.0 C69.8,208.0 71.2,208.4 72.5,207.8 C73.8,207.2 75.2,206.2 76.5,204.5 C77.8,202.8 79.2,200.4 80.5,197.8 C81.8,195.2 83.2,192.1 84.5,189.0 C85.8,185.8 87.2,181.4 88.5,178.9 C89.8,176.4 91.2,174.0 92.5,174.0 C93.8,174.0 95.2,177.2 96.5,179.0 C97.8,180.8 99.2,182.9 100.5,184.9 C101.8,186.9 103.2,189.2 104.5,191.2 C105.8,193.1 107.2,195.5 108.5,196.6 C109.8,197.6 111.2,197.4 112.5,197.6 C113.8,197.8 115.2,197.7 116.5,197.9 C117.8,198.1 119.2,198.1 120.5,198.7 C121.8,199.4 123.2,200.6 124.5,201.7 C125.8,202.8 127.2,203.5 128.5,205.5 C129.8,207.5 131.2,211.0 132.5,213.7 C133.8,216.4 135.2,219.6 136.5,221.8 C137.8,223.9 139.2,225.6 140.5,226.9 C141.8,228.2 143.2,228.7 144.5,229.6 C145.8,230.4 147.2,230.9 148.5,231.9 C149.8,232.8 151.2,233.9 152.5,235.1 C153.8,236.2 155.2,237.6 156.5,238.8 C157.8,240.1 159.2,241.2 160.5,242.5 C161.8,243.9 163.2,245.2 164.5,247.0 C165.8,248.7 167.2,251.5 168.5,252.9 C169.8,254.3 171.2,255.2 172.5,255.2 C173.8,255.2 175.2,253.9 176.5,252.9 C177.8,251.9 179.2,250.9 180.5,249.3 C181.8,247.8 183.2,245.6 184.5,243.8 C185.8,241.9 187.2,240.7 188.5,238.2 C189.8,235.7 191.2,232.1 192.5,229.0 C193.8,225.9 195.2,222.3 196.5,219.8 C197.8,217.2 199.2,215.3 200.5,213.5 C201.8,211.7 203.2,209.7 204.5,208.9 C205.8,208.2 207.2,208.7 208.5,209.2 C209.8,209.6 211.2,210.7 212.5,211.8 C213.8,212.9 215.2,214.2 216.5,215.7 C217.8,217.2 219.2,219.1 220.5,220.8 C221.8,222.5 223.2,226.1 224.5,225.8 C225.8,225.5 227.2,221.1 228.5,218.9 C229.8,216.7 231.2,214.5 232.5,212.5 C233.8,210.5 235.2,208.9 236.5,207.1 C237.8,205.3 239.2,203.3 240.5,201.7 C241.8,200.1 243.2,198.8 244.5,197.5 C245.8,196.2 247.2,194.8 248.5,193.9 C249.8,193.0 251.2,192.1 252.5,192.3 C253.8,192.4 255.2,192.9 256.5,194.8 C257.8,196.7 259.2,200.0 260.5,203.8 C261.8,207.6 263.2,215.4 264.5,217.7 C265.8,219.9 267.2,217.5 268.5,217.2 C269.8,216.9 271.2,216.2 272.5,215.8 C273.8,215.3 275.2,215.1 276.5,214.5 C277.8,213.8 279.2,213.8 280.5,211.9 C281.8,210.1 283.2,206.5 284.5,203.4 C285.8,200.3 287.2,196.9 288.5,193.3 C289.8,189.7 291.2,184.1 292.5,181.7 C293.8,179.3 295.2,179.6 296.5,178.9 C297.8,178.2 299.2,177.7 300.5,177.3 C301.8,177.0 303.2,176.6 304.5,176.7 C305.8,176.8 307.2,177.5 308.5,177.7 C309.8,178.0 311.2,178.2 312.5,178.1 C313.8,178.1 315.2,177.9 316.5,177.5 C317.8,177.0 319.2,175.6 320.5,175.4 C321.8,175.1 323.2,176.6 324.5,176.0 C325.8,175.4 327.2,174.8 328.5,171.7 C329.8,168.6 331.2,160.8 332.5,157.4 C333.8,154.0 335.2,152.7 336.5,151.1 C337.8,149.5 339.2,148.6 340.5,147.8 C341.8,147.0 343.2,148.6 344.5,146.1 C345.8,143.6 347.2,137.2 348.5,132.7 C349.8,128.2 351.2,122.3 352.5,119.1 C353.8,115.9 355.2,113.8 356.5,113.3 C357.8,112.9 359.2,115.5 360.5,116.5 C361.8,117.4 363.2,118.8 364.5,119.1 C365.8,119.4 367.2,118.2 368.5,118.1 C369.8,118.0 371.2,118.2 372.5,118.6 C373.8,118.9 375.2,119.4 376.5,120.1 C377.8,120.7 379.2,119.8 380.5,122.3 C381.8,124.8 383.2,128.8 384.5,134.9 C385.8,141.0 387.2,153.5 388.5,158.7 C389.8,163.9 391.2,164.2 392.5,166.0 C393.8,167.7 395.2,169.0 396.5,169.4 C397.8,169.7 399.2,165.9 400.5,168.2 C401.8,170.4 403.2,177.2 404.5,182.7 C405.8,188.2 407.2,197.6 408.5,201.3 C409.8,205.1 411.2,204.1 412.5,205.3 C413.8,206.6 415.2,208.3 416.5,209.0 C417.8,209.6 419.2,209.0 420.5,209.0 C421.8,209.0 423.2,208.5 424.5,209.1 C425.8,209.6 427.2,211.3 428.5,212.4 C429.8,213.5 431.2,214.4 432.5,215.9 C433.8,217.4 435.2,219.8 436.5,221.4 C437.8,223.1 439.2,225.7 440.5,225.8 C441.8,225.8 443.2,223.7 444.5,221.7 C445.8,219.7 447.2,215.4 448.5,213.9 C449.8,212.4 451.2,212.0 452.5,212.5 C453.8,213.0 455.2,212.8 456.5,216.8 C457.8,220.7 459.2,230.5 460.5,236.1 C461.8,241.6 463.2,247.2 464.5,250.1 C465.8,253.1 467.2,253.4 468.5,254.0 C469.8,254.6 471.2,253.8 472.5,253.6 C473.8,253.5 475.2,252.8 476.5,253.2 C477.8,253.5 479.2,254.8 480.5,255.5 C481.8,256.2 483.2,256.9 484.5,257.4 C485.8,258.0 487.2,258.8 488.5,258.6 C489.8,258.5 491.2,257.4 492.5,256.5 C493.8,255.6 495.2,254.2 496.5,253.3 C497.8,252.4 499.2,251.0 500.5,250.9 C501.8,250.8 503.2,252.1 504.5,252.8 C505.8,253.5 507.2,252.9 508.5,255.1 C509.8,257.3 511.2,262.1 512.5,265.8 C513.8,269.5 515.2,273.4 516.5,277.1 C517.8,280.8 519.2,285.4 520.5,287.9 C521.8,290.4 523.2,290.9 524.5,292.1 C525.8,293.4 527.2,294.6 528.5,295.4 C529.8,296.2 531.2,297.2 532.5,297.1 C533.8,297.0 535.2,296.4 536.5,295.1 C537.8,293.8 539.2,292.1 540.5,289.4 C541.8,286.8 543.2,282.1 544.5,279.4 C545.8,276.7 547.2,273.8 548.5,273.0 C549.8,272.3 551.2,274.0 552.5,274.9 C553.8,275.7 555.2,277.8 556.5,278.3 C557.8,278.8 559.2,278.3 560.5,277.8 C561.8,277.2 563.2,273.7 564.5,274.8 C565.8,276.0 567.2,281.6 568.5,284.9 C569.8,288.1 571.2,292.2 572.5,294.1 C573.8,296.1 575.2,295.4 576.5,296.5 C577.8,297.5 579.2,298.6 580.5,300.5 C581.8,302.3 583.2,305.8 584.5,307.5 C585.8,309.3 587.2,310.0 588.5,311.1 C589.8,312.1 591.2,314.4 592.5,314.1 C593.8,313.8 595.2,311.1 596.5,309.3 C597.8,307.5 599.2,304.4 600.5,303.3 C601.8,302.2 603.2,302.9 604.5,302.9 C605.8,302.8 607.2,302.1 608.5,303.1 C609.8,304.1 611.2,304.2 612.5,308.8 C613.8,313.4 615.2,325.2 616.5,330.6 C617.8,335.9 619.2,339.3 620.5,340.8 C621.8,342.3 623.2,340.2 624.5,339.8 C625.8,339.4 627.2,339.0 628.5,338.6 C629.8,338.2 631.2,337.6 632.5,337.6 C633.8,337.6 635.2,338.4 636.5,338.7 C637.8,339.1 639.2,340.5 640.5,339.8 C641.8,339.0 643.2,336.5 644.5,334.3 C645.8,332.2 647.2,328.4 648.5,326.8 C649.8,325.2 651.2,325.3 652.5,324.7 C653.8,324.1 655.2,324.2 656.5,323.2 C657.8,322.2 659.2,320.3 660.5,318.5 C661.8,316.7 663.2,314.6 664.5,312.4 C665.8,310.1 667.2,306.8 668.5,305.0 C669.8,303.1 671.2,302.1 672.5,301.4 C673.8,300.7 675.2,301.2 676.5,300.7 C677.8,300.3 679.2,299.3 680.5,298.6 C681.8,298.0 683.2,297.1 684.5,296.7 C685.8,296.2 687.2,296.4 688.5,296.0 C689.8,295.6 691.2,295.1 692.5,294.2 C693.8,293.3 695.2,291.8 696.5,290.4 C697.8,289.0 699.2,287.3 700.5,285.7 C701.8,284.2 703.2,281.7 704.5,281.2 C705.8,280.6 707.2,281.1 708.5,282.2 C709.8,283.3 711.2,287.9 712.5,287.8 C713.8,287.8 715.2,284.1 716.5,282.0 C717.8,280.0 719.2,277.6 720.5,275.6 C721.8,273.6 723.2,271.8 724.5,270.1 C725.8,268.4 727.2,266.0 728.5,265.2 C729.8,264.5 731.2,264.9 732.5,265.4 C733.8,265.8 735.8,267.6 736.5,268.1" fill="none" stroke="#ffffff" stroke-width="1" stroke-linejoin="round" stroke-linecap="round"/><path d="M64.0,174.3 C65.0,174.6 68.0,174.3 69.7,176.2 C71.5,178.1 73.1,182.6 74.5,185.8 C75.9,189.0 77.0,194.0 78.3,195.3 C79.6,196.6 80.8,196.3 82.1,193.4 C83.4,190.5 84.5,182.6 85.9,178.1 C87.3,173.6 89.1,169.9 90.7,166.7 C92.3,163.5 93.8,160.8 95.5,159.1 C97.2,157.4 99.1,157.1 101.2,156.8 C103.3,156.5 105.5,156.9 107.9,157.5 C110.3,158.1 112.7,159.9 115.5,160.6 C118.3,161.3 122.5,160.9 125.0,161.9 C127.5,162.9 128.8,164.8 130.7,166.7 C132.6,168.6 134.3,171.3 136.5,173.4 C138.7,175.5 141.6,177.3 144.1,179.1 C146.6,180.9 149.5,182.4 151.7,184.2 C153.9,185.9 155.8,187.8 157.4,189.6 C159.0,191.4 159.9,192.8 161.3,195.3 C162.7,197.8 164.4,201.6 166.0,204.8 C167.6,208.0 168.7,211.5 170.8,214.4 C172.9,217.3 175.9,219.6 178.4,222.0 C180.9,224.4 183.8,227.4 186.0,228.7 C188.2,230.0 190.2,230.4 191.8,229.6 C193.4,228.8 194.0,227.7 195.6,223.9 C197.2,220.1 199.4,211.5 201.3,206.7 C203.2,201.9 205.1,197.8 207.0,195.3 C208.9,192.8 210.5,191.7 212.7,191.5 C214.9,191.3 217.8,193.5 220.4,194.3 C223.0,195.1 225.5,196.0 228.0,196.3 C230.5,196.6 233.4,197.1 235.6,196.3 C237.8,195.5 239.1,193.7 241.3,191.5 C243.5,189.3 246.0,185.7 248.8,182.9 C251.6,180.1 255.8,175.5 258.3,174.9 C260.8,174.3 261.4,178.4 264.0,179.1 C266.6,179.8 270.7,178.8 273.6,179.1 C276.5,179.4 278.5,179.8 281.2,181.0 C283.9,182.2 287.4,187.2 289.8,186.1 C292.2,185.0 293.6,178.1 295.5,174.6 C297.4,171.1 299.0,167.8 301.2,165.1 C303.4,162.4 306.6,159.7 308.8,158.4 C311.0,157.1 312.7,157.2 314.6,157.5 C316.5,157.8 318.4,159.0 320.3,160.3 C322.2,161.6 324.4,164.0 326.0,165.1 C327.6,166.2 328.5,168.9 329.8,167.0 C331.1,165.1 332.0,157.1 333.6,153.6 C335.2,150.1 337.1,149.2 339.3,146.0 C341.5,142.8 345.1,138.4 347.0,134.6 C348.9,130.8 349.5,127.5 350.8,123.1 C352.1,118.6 353.5,112.2 354.6,107.9 C355.7,103.6 355.9,99.8 357.5,97.4 C359.1,95.0 362.0,93.9 364.1,93.6 C366.2,93.3 367.7,95.0 369.9,95.5 C372.1,96.0 375.3,95.8 377.5,96.4 C379.7,97.0 381.3,99.5 383.2,99.3 C385.1,99.1 387.1,96.9 388.9,95.5 C390.6,94.1 391.8,90.5 393.7,90.7 C395.6,90.9 398.3,95.3 400.4,96.4 C402.5,97.5 404.5,96.1 406.1,97.4 C407.7,98.7 408.3,101.1 409.9,104.1 C411.5,107.1 414.0,112.3 415.6,115.5 C417.2,118.7 418.0,118.6 419.4,123.1 C420.8,127.5 422.9,137.7 424.0,142.2 C425.1,146.7 424.6,146.8 425.9,150.0 C427.2,153.2 429.5,157.6 431.6,161.4 C433.7,165.2 436.7,169.1 438.3,172.9 C439.9,176.7 440.4,181.5 441.2,184.3 C442.0,187.2 441.5,188.4 443.1,190.0 C444.7,191.6 448.2,193.2 450.7,193.9 C453.2,194.6 456.1,194.8 458.3,194.2 C460.5,193.5 461.8,190.4 464.0,190.0 C466.2,189.6 469.1,191.0 471.7,192.0 C474.2,193.0 476.9,194.7 479.3,195.8 C481.7,196.9 484.2,196.1 486.0,198.6 C487.8,201.1 488.7,206.4 489.8,211.0 C490.9,215.6 491.5,222.2 492.6,226.3 C493.7,230.4 495.2,233.6 496.5,235.8 C497.8,238.0 498.4,239.3 500.3,239.6 C502.2,239.9 505.4,238.3 507.9,237.7 C510.4,237.1 513.0,236.4 515.5,235.8 C518.0,235.2 520.7,234.5 523.2,233.9 C525.8,233.3 528.6,231.5 530.8,232.0 C533.0,232.5 534.9,234.9 536.5,236.8 C538.1,238.7 539.0,240.7 540.3,243.4 C541.6,246.1 542.5,249.8 544.1,253.0 C545.7,256.2 547.7,260.9 549.9,262.5 C552.1,264.1 555.3,263.1 557.5,262.5 C559.7,261.9 561.0,259.5 563.2,258.7 C565.4,257.9 567.6,257.7 570.8,257.7 C574.0,257.7 579.4,257.7 582.3,258.7 C585.2,259.7 585.8,261.9 588.0,263.5 C590.2,265.1 593.6,267.1 595.6,268.2 C597.6,269.3 598.4,268.4 599.7,270.0 C601.0,271.6 602.2,274.8 603.5,277.7 C604.8,280.6 605.9,284.2 607.3,287.2 C608.7,290.2 610.5,295.5 612.1,295.8 C613.7,296.1 614.8,290.6 616.9,289.1 C619.0,287.6 622.0,286.8 624.5,286.8 C627.0,286.8 629.9,287.8 632.1,289.1 C634.3,290.4 636.0,292.2 637.9,294.8 C639.8,297.4 641.7,301.2 643.6,304.4 C645.5,307.6 647.7,310.7 649.3,313.9 C650.9,317.1 651.8,322.1 653.1,323.4 C654.4,324.7 655.3,323.1 656.9,321.5 C658.5,319.9 660.5,317.7 662.7,313.9 C664.9,310.1 668.1,303.1 670.3,298.6 C672.5,294.2 673.8,289.6 676.0,287.2 C678.2,284.8 681.1,285.4 683.6,284.3 C686.1,283.2 688.9,280.3 691.3,280.5 C693.7,280.7 695.8,286.1 697.9,285.3 C700.0,284.5 701.9,277.9 703.6,275.8 C705.4,273.7 706.0,273.7 708.4,272.9 C710.8,272.1 715.5,272.8 718.0,271.0 C720.5,269.2 722.1,265.4 723.7,262.4 C725.3,259.4 726.2,255.0 727.5,252.9 C728.8,250.8 729.9,250.6 731.3,250.0 C732.7,249.4 735.3,249.7 736.1,249.6" fill="none" stroke="#0000ff" stroke-width="2.3" stroke-linejoin="round" stroke-linecap="round"/><path d="M64.0,226.8 C65.3,226.6 69.4,226.9 71.6,225.8 C73.8,224.7 75.7,221.4 77.3,220.1 C78.9,218.8 80.1,217.6 81.2,218.2 C82.3,218.8 82.4,222.2 84.0,223.9 C85.6,225.7 88.3,228.1 90.7,228.7 C93.1,229.3 96.1,228.8 98.3,227.7 C100.5,226.6 101.8,224.1 104.0,222.0 C106.2,219.9 109.2,217.2 111.7,215.3 C114.2,213.5 117.1,211.4 119.3,210.9 C121.5,210.4 123.1,211.2 125.0,212.1 C126.9,213.0 129.1,214.3 130.7,216.3 C132.3,218.3 133.0,221.1 134.6,223.9 C136.2,226.8 138.1,230.2 140.3,233.4 C142.5,236.6 145.4,239.5 147.9,243.0 C150.4,246.5 152.9,252.0 155.5,254.4 C158.1,256.8 160.6,256.5 163.2,257.3 C165.8,258.1 168.3,258.4 170.8,259.2 C173.3,260.0 175.5,261.9 178.4,262.0 C181.3,262.1 185.1,259.8 188.0,260.1 C190.9,260.4 193.4,262.4 195.6,264.0 C197.8,265.6 199.4,268.4 201.3,269.7 C203.2,271.0 205.4,271.9 207.0,271.6 C208.6,271.3 209.2,270.4 210.8,267.8 C212.4,265.2 214.7,260.0 216.6,256.3 C218.5,252.6 220.1,248.5 222.3,245.8 C224.5,243.1 227.2,242.0 229.7,240.1 C232.2,238.2 235.1,235.0 237.3,234.4 C239.5,233.8 241.2,235.4 243.1,236.3 C245.0,237.2 246.9,239.5 248.8,240.1 C250.7,240.7 252.6,240.7 254.5,240.1 C256.4,239.5 258.6,238.2 260.2,236.3 C261.8,234.4 262.4,230.2 264.0,228.6 C265.6,227.0 267.6,226.7 269.8,226.7 C272.0,226.7 274.9,228.1 277.4,228.6 C279.9,229.1 282.8,229.6 285.0,229.6 C287.2,229.6 288.8,227.6 290.7,228.6 C292.6,229.6 294.8,233.9 296.5,235.3 C298.2,236.7 299.6,237.8 301.2,237.2 C302.8,236.6 304.2,234.2 306.0,231.5 C307.8,228.8 309.8,224.7 311.7,221.0 C313.6,217.3 315.5,213.7 317.4,209.6 C319.3,205.5 321.3,200.3 323.2,196.2 C325.1,192.1 327.3,185.8 328.9,184.8 C330.5,183.9 331.1,188.9 332.7,190.5 C334.3,192.1 336.2,193.5 338.4,194.3 C340.6,195.1 342.8,195.3 346.0,195.3 C349.2,195.3 354.6,196.1 357.5,194.3 C360.4,192.6 361.6,188.3 363.2,184.8 C364.8,181.3 365.6,177.5 367.0,173.3 C368.4,169.1 370.1,163.0 371.8,159.4 C373.6,155.8 375.6,153.9 377.5,151.7 C379.4,149.5 381.3,146.3 383.2,146.0 C385.1,145.7 387.0,146.0 388.9,149.8 C390.8,153.6 392.4,162.9 394.6,168.9 C396.8,174.9 399.8,179.8 402.3,186.1 C404.9,192.4 407.7,201.0 409.9,207.0 C412.1,213.0 413.2,218.5 415.6,222.3 C418.0,226.1 420.7,227.8 424.0,230.0 C427.3,232.2 432.2,235.2 435.4,235.7 C438.6,236.2 440.2,233.4 443.1,232.9 C446.0,232.4 450.1,231.8 452.6,232.9 C455.1,234.0 456.4,236.2 458.3,239.5 C460.2,242.8 462.1,248.1 464.0,252.9 C465.9,257.7 467.6,264.0 469.8,268.1 C472.0,272.2 475.2,275.1 477.4,277.7 C479.6,280.2 481.5,281.6 483.1,283.4 C484.7,285.1 485.6,288.2 486.9,288.2 C488.2,288.2 489.1,285.5 490.7,283.4 C492.3,281.3 494.3,277.7 496.5,275.8 C498.7,273.9 501.6,272.3 504.1,272.0 C506.6,271.7 509.5,272.3 511.7,273.9 C513.9,275.5 515.2,278.3 517.4,281.5 C519.6,284.7 522.9,288.8 525.1,292.9 C527.3,297.0 528.9,302.2 530.8,306.3 C532.7,310.4 534.9,315.2 536.5,317.7 C538.1,320.2 538.4,321.8 540.3,321.5 C542.2,321.2 545.1,317.2 548.0,315.8 C550.9,314.4 554.3,313.6 557.5,313.0 C560.7,312.4 563.8,313.0 567.0,312.0 C570.2,311.0 574.1,307.8 576.6,307.2 C579.1,306.6 580.1,305.8 582.3,308.2 C584.5,310.6 587.4,318.6 589.9,321.5 C592.4,324.4 595.5,324.7 597.5,325.3 C599.5,325.9 600.0,326.1 601.6,325.3 C603.2,324.5 605.4,321.9 607.3,320.6 C609.2,319.3 611.5,316.9 613.1,317.7 C614.7,318.5 615.6,321.8 616.9,325.3 C618.2,328.8 619.1,334.9 620.7,338.7 C622.3,342.5 624.2,345.2 626.4,348.2 C628.6,351.2 631.5,354.9 634.0,356.8 C636.5,358.7 639.5,359.7 641.7,359.7 C643.9,359.7 645.5,358.4 647.4,356.8 C649.3,355.2 650.9,351.3 653.1,350.1 C655.3,348.9 658.2,349.6 660.7,349.8 C663.2,350.0 666.2,350.7 668.4,351.1 C670.6,351.5 672.2,353.1 674.1,352.0 C676.0,350.9 677.6,346.9 679.8,344.4 C682.0,341.9 685.2,340.3 687.4,336.8 C689.6,333.3 691.0,326.9 693.2,323.4 C695.4,319.9 698.3,317.7 700.8,315.8 C703.3,313.9 705.5,313.0 708.4,312.0 C711.3,311.0 714.8,310.3 718.0,309.7 C721.2,309.1 725.0,309.4 727.5,308.2 C730.0,307.0 731.8,304.4 733.2,302.5 C734.6,300.6 735.6,297.7 736.1,296.7" fill="none" stroke="#ff8000" stroke-width="2.3" stroke-linejoin="round" stroke-linecap="round"/><polyline points="64.0,417.1 66.0,417.6 68.0,418.0 70.0,418.5 72.0,419.0 74.0,419.5 76.0,419.9 78.0,420.4 80.0,420.9 82.0,421.1 84.0,419.9" fill="none" stroke="#a00000" stroke-width="3.8" stroke-linejoin="round" stroke-dasharray="3,1"/><polyline points="84.0,419.9 86.0,418.7 88.0,417.5 90.0,416.3 92.0,415.1 94.0,413.9 96.0,412.7 98.0,411.5 100.0,410.6 102.0,411.2 104.0,411.7" fill="none" stroke="#0000ff" stroke-width="3.8" stroke-linejoin="round" stroke-dasharray="3,1"/><polyline points="104.0,411.7 106.0,412.3 108.0,413.2 110.0,414.5 112.0,415.8 114.0,417.1 116.0,418.4 118.0,419.7 120.0,421.0 122.0,422.3 124.0,423.6 126.0,425.2 128.0,427.2 130.0,429.2 132.0,431.1 134.0,433.1 136.0,435.2 138.0,438.5 140.0,441.9 142.0,445.2 144.0,448.6 146.0,451.9 148.0,453.9 150.0,455.1 152.0,456.4 154.0,457.6 156.0,458.9 158.0,460.1 160.0,461.4 162.0,462.4 164.0,463.0 166.0,463.7 168.0,464.3 170.0,465.0 172.0,465.6 174.0,466.3 176.0,466.7 178.0,466.0" fill="none" stroke="#a00000" stroke-width="3.8" stroke-linejoin="round" stroke-dasharray="3,1"/><polyline points="178.0,466.0 180.0,465.4 182.0,464.7 184.0,464.1 186.0,463.4 188.0,462.8 190.0,462.1 192.0,459.8 194.0,457.5 196.0,455.2 198.0,452.9 200.0,450.5 202.0,447.5 204.0,443.8 206.0,440.2 208.0,436.5 210.0,432.9 212.0,429.5 214.0,428.5 216.0,427.5 218.0,426.5 220.0,425.8 222.0,425.3 224.0,424.8 226.0,424.4 228.0,423.9 230.0,423.3 232.0,421.3 234.0,419.3 236.0,417.3 238.0,415.3 240.0,413.3 242.0,412.0 244.0,411.1 246.0,410.2 248.0,409.3 250.0,408.4 252.0,407.5 254.0,406.6 256.0,406.4 258.0,406.9" fill="none" stroke="#0000ff" stroke-width="3.8" stroke-linejoin="round" stroke-dasharray="3,1"/><polyline points="258.0,406.9 260.0,407.4 262.0,407.9 264.0,409.5 266.0,411.2 268.0,412.9 270.0,414.6 272.0,416.3 274.0,418.0 276.0,419.7 278.0,421.4 280.0,423.2 282.0,422.8 284.0,421.9" fill="none" stroke="#a00000" stroke-width="3.8" stroke-linejoin="round" stroke-dasharray="3,1"/><polyline points="284.0,421.9 286.0,421.0 288.0,420.1 290.0,419.2 292.0,418.3 294.0,417.4 296.0,416.1 298.0,414.4 300.0,412.8 302.0,411.1 304.0,409.4 306.0,407.9 308.0,407.4 310.0,406.9 312.0,406.4 314.0,405.9 316.0,405.4 318.0,404.9 320.0,404.4 322.0,403.7 324.0,403.1 326.0,402.4 328.0,401.8 330.0,401.1 332.0,400.4 334.0,399.8 336.0,399.3 338.0,398.8 340.0,398.4 342.0,397.9 344.0,397.4 346.0,397.0 348.0,396.5 350.0,396.1 352.0,395.6 354.0,395.1 356.0,394.7 358.0,395.0" fill="none" stroke="#0000ff" stroke-width="3.8" stroke-linejoin="round" stroke-dasharray="3,1"/><polyline points="358.0,395.0 360.0,395.5 362.0,396.0 364.0,396.5 366.0,397.0 368.0,397.5 370.0,398.0 372.0,398.9 374.0,400.0 376.0,401.1 378.0,402.2 380.0,403.3 382.0,404.4 384.0,405.4 386.0,407.3 388.0,410.3 390.0,413.4 392.0,416.4 394.0,419.6 396.0,422.9 398.0,426.2 400.0,429.6 402.0,432.9 404.0,435.9 406.0,438.4 408.0,440.9 410.0,443.4 412.0,445.9 414.0,448.4 416.0,451.0 418.0,453.3 420.0,454.3 422.0,455.4 424.0,456.5 426.0,457.5 428.0,458.6 430.0,459.7 432.0,460.8 434.0,461.8 436.0,462.9 438.0,463.9 440.0,464.9 442.0,465.9 444.0,466.9 446.0,467.5 448.0,467.3 450.0,467.1" fill="none" stroke="#a00000" stroke-width="3.8" stroke-linejoin="round" stroke-dasharray="3,1"/><polyline points="450.0,467.1 452.0,466.9 454.0,467.1" fill="none" stroke="#0000ff" stroke-width="3.8" stroke-linejoin="round" stroke-dasharray="3,1"/><polyline points="454.0,467.1 456.0,467.5 458.0,467.9 460.0,468.4 462.0,468.9 464.0,469.4 466.0,469.9 468.0,470.4 470.0,470.9 472.0,471.4 474.0,471.9 476.0,471.9 478.0,471.9 480.0,471.9 482.0,471.9 484.0,471.9 486.0,471.9 488.0,471.1" fill="none" stroke="#a00000" stroke-width="3.8" stroke-linejoin="round" stroke-dasharray="3,1"/><polyline points="488.0,471.1 490.0,469.7 492.0,468.4 494.0,467.0 496.0,465.7 498.0,464.7 500.0,463.7 502.0,462.7 504.0,461.8 506.0,460.8 508.0,459.8 510.0,459.8 512.0,460.0" fill="none" stroke="#0000ff" stroke-width="3.8" stroke-linejoin="round" stroke-dasharray="3,1"/><polyline points="512.0,460.0 514.0,460.3 516.0,461.3 518.0,462.3 520.0,463.3 522.0,464.4 524.0,465.4 526.0,466.4 528.0,467.4 530.0,468.0 532.0,468.5 534.0,469.1 536.0,469.6 538.0,470.1 540.0,469.6 542.0,467.8" fill="none" stroke="#a00000" stroke-width="3.8" stroke-linejoin="round" stroke-dasharray="3,1"/><polyline points="542.0,467.8 544.0,465.9 546.0,464.0 548.0,462.1 550.0,460.2 552.0,458.3 554.0,456.5 556.0,455.3 558.0,454.0 560.0,452.8 562.0,451.5 564.0,450.3 566.0,449.0 568.0,447.8 570.0,448.0 572.0,448.3" fill="none" stroke="#0000ff" stroke-width="3.8" stroke-linejoin="round" stroke-dasharray="3,1"/><polyline points="572.0,448.3 574.0,448.6 576.0,449.2 578.0,450.4 580.0,451.6 582.0,452.8 584.0,454.0 586.0,455.2 588.0,456.4 590.0,457.6 592.0,458.8 594.0,459.7 596.0,460.0 598.0,460.4 600.0,460.7 602.0,461.0 604.0,461.4 606.0,461.7 608.0,462.0 610.0,462.4 612.0,462.7 614.0,463.0 616.0,463.4 618.0,463.8 620.0,464.2 622.0,464.6 624.0,465.0 626.0,465.4 628.0,465.8 630.0,466.2 632.0,466.6 634.0,467.0 636.0,467.4 638.0,467.5 640.0,467.2 642.0,467.0" fill="none" stroke="#a00000" stroke-width="3.8" stroke-linejoin="round" stroke-dasharray="3,1"/><polyline points="642.0,467.0 644.0,466.8 646.0,465.7 648.0,464.5 650.0,463.4 652.0,462.2 654.0,461.1 656.0,459.9 658.0,458.8 660.0,456.2 662.0,453.2 664.0,450.2 666.0,447.2 668.0,444.2 670.0,441.3 672.0,438.3 674.0,435.3 676.0,432.3 678.0,429.3 680.0,426.3 682.0,424.7 684.0,423.2 686.0,421.7 688.0,420.2 690.0,418.7 692.0,417.2 694.0,415.7 696.0,414.3 698.0,412.9 700.0,411.6 702.0,410.3 704.0,408.9 706.0,408.0 708.0,408.0 710.0,408.0" fill="none" stroke="#0000ff" stroke-width="3.8" stroke-linejoin="round" stroke-dasharray="3,1"/><polyline points="710.0,408.0 712.0,408.0 714.0,408.0 716.0,408.0 718.0,407.1" fill="none" stroke="#a00000" stroke-width="3.8" stroke-linejoin="round" stroke-dasharray="3,1"/><polyline points="718.0,407.1 720.0,406.1 722.0,405.1 724.0,404.1 726.0,403.1 728.0,402.3 730.0,401.9 732.0,401.6 734.0,401.2 736.0,400.8" fill="none" stroke="#0000ff" stroke-width="3.8" stroke-linejoin="round" stroke-dasharray="3,1"/><g stroke-width="1"><rect x="70" y="533.3" width="2" height="0.7" fill="#ff3c3c"/><rect x="73" y="533.1" width="2" height="0.9" fill="#ff3c3c"/><rect x="76" y="531.0" width="2" height="3.0" fill="#ff3c3c"/><rect x="79" y="529.3" width="2" height="4.7" fill="#ff3c3c"/><rect x="82" y="521.0" width="2" height="13.0" fill="#ff3c3c"/><rect x="85" y="517.0" width="2" height="17.0" fill="#ff3c3c"/><rect x="88" y="516.1" width="2" height="17.9" fill="#ff3c3c"/><rect x="91" y="517.2" width="2" height="16.8" fill="#ff3c3c"/><rect x="94" y="523.3" width="2" height="10.7" fill="#ff3c3c"/><rect x="97" y="529.9" width="2" height="4.1" fill="#ff3c3c"/><rect x="100" y="533" width="2" height="10.2" fill="#00ffff"/><rect x="103" y="533" width="2" height="13.6" fill="#00ffff"/><rect x="106" y="533" width="2" height="15.0" fill="#00ffff"/><rect x="109" y="533" width="2" height="15.0" fill="#00ffff"/><rect x="112" y="533" width="2" height="16.4" fill="#00ffff"/><rect x="115" y="533" width="2" height="17.0" fill="#00ffff"/><rect x="118" y="533" width="2" height="5.0" fill="#00ffff"/><rect x="121" y="533" width="2" height="5.0" fill="#00ffff"/><rect x="124" y="533" width="2" height="4.2" fill="#00ffff"/><rect x="127" y="533" width="2" height="5.3" fill="#00ffff"/><rect x="130" y="533" width="2" height="9.3" fill="#00ffff"/><rect x="133" y="533" width="2" height="12.4" fill="#00ffff"/><rect x="136" y="533" width="2" height="14.7" fill="#00ffff"/><rect x="139" y="533" width="2" height="13.4" fill="#00ffff"/><rect x="142" y="533" width="2" height="9.5" fill="#00ffff"/><rect x="145" y="533" width="2" height="4.7" fill="#00ffff"/><rect x="148" y="533" width="2" height="2.0" fill="#00ffff"/><rect x="151" y="533" width="2" height="2.3" fill="#00ffff"/><rect x="154" y="533" width="2" height="2.9" fill="#00ffff"/><rect x="157" y="532.0" width="2" height="2.0" fill="#ff3c3c"/><rect x="160" y="530.8" width="2" height="3.2" fill="#ff3c3c"/><rect x="163" y="530.1" width="2" height="3.9" fill="#ff3c3c"/><rect x="166" y="531.5" width="2" height="2.5" fill="#ff3c3c"/><rect x="169" y="533" width="2" height="1.8" fill="#00ffff"/><rect x="172" y="533" width="2" height="1.5" fill="#00ffff"/><rect x="175" y="532.1" width="2" height="1.9" fill="#ff3c3c"/><rect x="178" y="527.0" width="2" height="7.0" fill="#ff3c3c"/><rect x="181" y="522.5" width="2" height="11.5" fill="#ff3c3c"/><rect x="184" y="519.1" width="2" height="14.9" fill="#ff3c3c"/><rect x="187" y="520.0" width="2" height="14.0" fill="#ff3c3c"/><rect x="190" y="521.5" width="2" height="12.5" fill="#ff3c3c"/><rect x="193" y="520.3" width="2" height="13.7" fill="#ff3c3c"/><rect x="196" y="517.5" width="2" height="16.5" fill="#ff3c3c"/><rect x="199" y="515.2" width="2" height="18.8" fill="#ff3c3c"/><rect x="202" y="516.6" width="2" height="17.4" fill="#ff3c3c"/><rect x="205" y="519.7" width="2" height="14.3" fill="#ff3c3c"/><rect x="208" y="524.8" width="2" height="9.2" fill="#ff3c3c"/><rect x="211" y="530.6" width="2" height="3.4" fill="#ff3c3c"/><rect x="214" y="533" width="2" height="6.1" fill="#00ffff"/><rect x="217" y="533" width="2" height="10.7" fill="#00ffff"/><rect x="220" y="533" width="2" height="17.5" fill="#00ffff"/><rect x="223" y="533" width="2" height="19.8" fill="#00ffff"/><rect x="226" y="533" width="2" height="13.4" fill="#00ffff"/><rect x="229" y="533" width="2" height="5.7" fill="#00ffff"/><rect x="232" y="531.4" width="2" height="2.6" fill="#ff3c3c"/><rect x="235" y="529.1" width="2" height="4.9" fill="#ff3c3c"/><rect x="238" y="526.7" width="2" height="7.3" fill="#ff3c3c"/><rect x="241" y="522.4" width="2" height="11.6" fill="#ff3c3c"/><rect x="244" y="522.2" width="2" height="11.8" fill="#ff3c3c"/><rect x="247" y="522.9" width="2" height="11.1" fill="#ff3c3c"/><rect x="250" y="525.1" width="2" height="8.9" fill="#ff3c3c"/><rect x="253" y="533" width="2" height="2.5" fill="#00ffff"/><rect x="256" y="533" width="2" height="8.4" fill="#00ffff"/><rect x="259" y="533" width="2" height="14.2" fill="#00ffff"/><rect x="262" y="533" width="2" height="19.6" fill="#00ffff"/><rect x="265" y="533" width="2" height="18.7" fill="#00ffff"/><rect x="268" y="533" width="2" height="14.0" fill="#00ffff"/><rect x="271" y="533" width="2" height="8.9" fill="#00ffff"/><rect x="274" y="533" width="2" height="5.7" fill="#00ffff"/><rect x="277" y="533" width="2" height="3.3" fill="#00ffff"/><rect x="280" y="530.7" width="2" height="3.3" fill="#ff3c3c"/><rect x="283" y="525.9" width="2" height="8.1" fill="#ff3c3c"/><rect x="286" y="520.9" width="2" height="13.1" fill="#ff3c3c"/><rect x="289" y="515.8" width="2" height="18.2" fill="#ff3c3c"/><rect x="292" y="515.3" width="2" height="18.7" fill="#ff3c3c"/><rect x="295" y="517.0" width="2" height="17.0" fill="#ff3c3c"/><rect x="298" y="521.0" width="2" height="13.0" fill="#ff3c3c"/><rect x="301" y="525.3" width="2" height="8.7" fill="#ff3c3c"/><rect x="304" y="530.0" width="2" height="4.0" fill="#ff3c3c"/><rect x="307" y="533" width="2" height="2.9" fill="#00ffff"/><rect x="310" y="533" width="2" height="7.1" fill="#00ffff"/><rect x="313" y="533" width="2" height="9.8" fill="#00ffff"/><rect x="316" y="533" width="2" height="8.7" fill="#00ffff"/><rect x="319" y="533" width="2" height="4.0" fill="#00ffff"/><rect x="322" y="533" width="2" height="4.7" fill="#00ffff"/><rect x="325" y="533" width="2" height="5.6" fill="#00ffff"/><rect x="328" y="533" width="2" height="5.9" fill="#00ffff"/><rect x="331" y="524.8" width="2" height="9.2" fill="#ff3c3c"/><rect x="334" y="522.0" width="2" height="12.0" fill="#ff3c3c"/><rect x="337" y="522.0" width="2" height="12.0" fill="#ff3c3c"/><rect x="340" y="527.6" width="2" height="6.4" fill="#ff3c3c"/><rect x="343" y="531.1" width="2" height="2.9" fill="#ff3c3c"/><rect x="346" y="532.8" width="2" height="1.2" fill="#ff3c3c"/><rect x="349" y="520.8" width="2" height="13.2" fill="#ff3c3c"/><rect x="352" y="519.5" width="2" height="14.5" fill="#ff3c3c"/><rect x="355" y="519.0" width="2" height="15.0" fill="#ff3c3c"/><rect x="358" y="523.0" width="2" height="11.0" fill="#ff3c3c"/><rect x="361" y="533" width="2" height="4.8" fill="#00ffff"/><rect x="364" y="533" width="2" height="7.9" fill="#00ffff"/><rect x="367" y="533" width="2" height="10.1" fill="#00ffff"/><rect x="370" y="533" width="2" height="11.1" fill="#00ffff"/><rect x="373" y="533" width="2" height="12.1" fill="#00ffff"/><rect x="376" y="533" width="2" height="13.2" fill="#00ffff"/><rect x="379" y="533" width="2" height="14.5" fill="#00ffff"/><rect x="382" y="533" width="2" height="15.7" fill="#00ffff"/><rect x="385" y="533" width="2" height="19.2" fill="#00ffff"/><rect x="388" y="533" width="2" height="23.0" fill="#00ffff"/><rect x="391" y="533" width="2" height="22.8" fill="#00ffff"/><rect x="394" y="533" width="2" height="22.2" fill="#00ffff"/><rect x="397" y="533" width="2" height="19.4" fill="#00ffff"/><rect x="400" y="533" width="2" height="16.6" fill="#00ffff"/><rect x="403" y="533" width="2" height="15.8" fill="#00ffff"/><rect x="406" y="533" width="2" height="14.7" fill="#00ffff"/><rect x="409" y="533" width="2" height="11.2" fill="#00ffff"/><rect x="412" y="533" width="2" height="7.8" fill="#00ffff"/><rect x="415" y="533" width="2" height="5.5" fill="#00ffff"/><rect x="418" y="533" width="2" height="3.6" fill="#00ffff"/><rect x="421" y="529.2" width="2" height="4.8" fill="#ff3c3c"/><rect x="424" y="524.9" width="2" height="9.1" fill="#ff3c3c"/><rect x="427" y="524.0" width="2" height="10.0" fill="#ff3c3c"/><rect x="430" y="524.0" width="2" height="10.0" fill="#ff3c3c"/><rect x="433" y="531.1" width="2" height="2.9" fill="#ff3c3c"/><rect x="436" y="531.0" width="2" height="3.0" fill="#ff3c3c"/><rect x="439" y="531.3" width="2" height="2.7" fill="#ff3c3c"/><rect x="442" y="532.1" width="2" height="1.9" fill="#ff3c3c"/><rect x="445" y="525.6" width="2" height="8.4" fill="#ff3c3c"/><rect x="448" y="514.5" width="2" height="19.5" fill="#ff3c3c"/><rect x="451" y="513.9" width="2" height="20.1" fill="#ff3c3c"/><rect x="454" y="519.7" width="2" height="14.3" fill="#ff3c3c"/><rect x="457" y="533" width="2" height="4.4" fill="#00ffff"/><rect x="460" y="533" width="2" height="10.6" fill="#00ffff"/><rect x="463" y="533" width="2" height="16.4" fill="#00ffff"/><rect x="466" y="533" width="2" height="15.9" fill="#00ffff"/><rect x="469" y="533" width="2" height="11.1" fill="#00ffff"/><rect x="472" y="533" width="2" height="5.4" fill="#00ffff"/><rect x="475" y="527.0" width="2" height="7.0" fill="#ff3c3c"/><rect x="478" y="524.0" width="2" height="10.0" fill="#ff3c3c"/><rect x="481" y="526.1" width="2" height="7.9" fill="#ff3c3c"/><rect x="484" y="531.6" width="2" height="2.4" fill="#ff3c3c"/><rect x="487" y="533" width="2" height="2.3" fill="#00ffff"/><rect x="490" y="526.6" width="2" height="7.4" fill="#ff3c3c"/><rect x="493" y="521.9" width="2" height="12.1" fill="#ff3c3c"/><rect x="496" y="521.3" width="2" height="12.7" fill="#ff3c3c"/><rect x="499" y="520.5" width="2" height="13.5" fill="#ff3c3c"/><rect x="502" y="520.1" width="2" height="13.9" fill="#ff3c3c"/><rect x="505" y="523.8" width="2" height="10.2" fill="#ff3c3c"/><rect x="508" y="530.1" width="2" height="3.9" fill="#ff3c3c"/><rect x="511" y="533" width="2" height="6.7" fill="#00ffff"/><rect x="514" y="533" width="2" height="11.2" fill="#00ffff"/><rect x="517" y="533" width="2" height="14.0" fill="#00ffff"/><rect x="520" y="533" width="2" height="14.9" fill="#00ffff"/><rect x="523" y="533" width="2" height="11.3" fill="#00ffff"/><rect x="526" y="533" width="2" height="7.4" fill="#00ffff"/><rect x="529" y="533" width="2" height="5.3" fill="#00ffff"/><rect x="532" y="533" width="2" height="4.0" fill="#00ffff"/><rect x="535" y="533" width="2" height="2.9" fill="#00ffff"/><rect x="538" y="533" width="2" height="1.5" fill="#00ffff"/><rect x="541" y="523.7" width="2" height="10.3" fill="#ff3c3c"/><rect x="544" y="515.2" width="2" height="18.8" fill="#ff3c3c"/><rect x="547" y="510.2" width="2" height="23.8" fill="#ff3c3c"/><rect x="550" y="514.7" width="2" height="19.3" fill="#ff3c3c"/><rect x="553" y="522.9" width="2" height="11.1" fill="#ff3c3c"/><rect x="556" y="528.2" width="2" height="5.8" fill="#ff3c3c"/><rect x="559" y="528.7" width="2" height="5.3" fill="#ff3c3c"/><rect x="562" y="528.2" width="2" height="5.8" fill="#ff3c3c"/><rect x="565" y="531.2" width="2" height="2.8" fill="#ff3c3c"/><rect x="568" y="533" width="2" height="6.8" fill="#00ffff"/><rect x="571" y="533" width="2" height="9.6" fill="#00ffff"/><rect x="574" y="533" width="2" height="12.2" fill="#00ffff"/><rect x="577" y="533" width="2" height="12.9" fill="#00ffff"/><rect x="580" y="533" width="2" height="10.1" fill="#00ffff"/><rect x="583" y="533" width="2" height="7.7" fill="#00ffff"/><rect x="586" y="533" width="2" height="6.6" fill="#00ffff"/><rect x="589" y="533" width="2" height="5.5" fill="#00ffff"/><rect x="592" y="533" width="2" height="4.5" fill="#00ffff"/><rect x="595" y="531.0" width="2" height="3.0" fill="#ff3c3c"/><rect x="598" y="527.1" width="2" height="6.9" fill="#ff3c3c"/><rect x="601" y="527.6" width="2" height="6.4" fill="#ff3c3c"/><rect x="604" y="529.0" width="2" height="5.0" fill="#ff3c3c"/><rect x="607" y="529.0" width="2" height="5.0" fill="#ff3c3c"/><rect x="610" y="529.0" width="2" height="5.0" fill="#ff3c3c"/><rect x="613" y="533" width="2" height="5.0" fill="#00ffff"/><rect x="616" y="533" width="2" height="12.4" fill="#00ffff"/><rect x="619" y="533" width="2" height="14.9" fill="#00ffff"/><rect x="622" y="533" width="2" height="13.5" fill="#00ffff"/><rect x="625" y="533" width="2" height="9.9" fill="#00ffff"/><rect x="628" y="533" width="2" height="2.3" fill="#00ffff"/><rect x="631" y="529.8" width="2" height="4.2" fill="#ff3c3c"/><rect x="634" y="528.2" width="2" height="5.8" fill="#ff3c3c"/><rect x="637" y="526.1" width="2" height="7.9" fill="#ff3c3c"/><rect x="640" y="526.9" width="2" height="7.1" fill="#ff3c3c"/><rect x="643" y="524.3" width="2" height="9.7" fill="#ff3c3c"/><rect x="646" y="519.3" width="2" height="14.7" fill="#ff3c3c"/><rect x="649" y="521.2" width="2" height="12.8" fill="#ff3c3c"/><rect x="652" y="524.4" width="2" height="9.6" fill="#ff3c3c"/><rect x="655" y="525.6" width="2" height="8.4" fill="#ff3c3c"/><rect x="658" y="523.7" width="2" height="10.3" fill="#ff3c3c"/><rect x="661" y="522.4" width="2" height="11.6" fill="#ff3c3c"/><rect x="664" y="521.4" width="2" height="12.6" fill="#ff3c3c"/><rect x="667" y="520.5" width="2" height="13.5" fill="#ff3c3c"/><rect x="670" y="520.1" width="2" height="13.9" fill="#ff3c3c"/><rect x="673" y="520.6" width="2" height="13.4" fill="#ff3c3c"/><rect x="676" y="527.3" width="2" height="6.7" fill="#ff3c3c"/><rect x="679" y="533" width="2" height="2.7" fill="#00ffff"/><rect x="682" y="533" width="2" height="2.9" fill="#00ffff"/><rect x="685" y="533" width="2" height="2.5" fill="#00ffff"/><rect x="688" y="533" width="2" height="2.9" fill="#00ffff"/><rect x="691" y="533" width="2" height="4.7" fill="#00ffff"/><rect x="694" y="533" width="2" height="5.0" fill="#00ffff"/><rect x="697" y="530.5" width="2" height="3.5" fill="#ff3c3c"/><rect x="700" y="526.7" width="2" height="7.3" fill="#ff3c3c"/><rect x="703" y="526.2" width="2" height="7.8" fill="#ff3c3c"/><rect x="706" y="533" width="2" height="2.2" fill="#00ffff"/><rect x="709" y="533" width="2" height="7.6" fill="#00ffff"/><rect x="712" y="533" width="2" height="7.5" fill="#00ffff"/><rect x="715" y="533" width="2" height="5.9" fill="#00ffff"/><rect x="718" y="533" width="2" height="4.5" fill="#00ffff"/><rect x="721" y="527.3" width="2" height="6.7" fill="#ff3c3c"/><rect x="724" y="524.2" width="2" height="9.8" fill="#ff3c3c"/><rect x="727" y="525.9" width="2" height="8.1" fill="#ff3c3c"/><rect x="730" y="530.8" width="2" height="3.2" fill="#ff3c3c"/><rect x="733" y="533" width="2" height="4.1" fill="#00ffff"/><rect x="736" y="533" width="2" height="5.0" fill="#00ffff"/></g><polyline points="64.0,536.6 74.5,536.6 81.6,534.0 88.6,521.6 95.6,512.9 100.9,514.6 108.0,523.4 115.0,533.1 122.0,538.3 130.8,541.9 136.1,547.1 144.9,555.0 155.4,555.9 166.0,555.0 173.0,555.0 183.5,546.2 194.1,533.9 204.6,518.1 209.9,512.9 216.9,514.6 224.0,525.2 231.0,531.3 239.8,530.4 244.0,518.1 252.8,514.6 259.8,518.1 266.9,532.2 273.9,538.3 282.7,537.5 289.7,528.7 296.7,517.2 305.5,512.9 317.8,519.0 326.6,521.6 331.9,520.8 337.2,514.6 347.7,511.1 354.7,502.3 360.9,497.9 368.8,505.8 377.6,514.6 386.4,530.4 393.4,548.0 400.4,555.0 409.2,565.6 418.0,570.9 424.0,570.0 432.8,562.1 441.6,559.4 446.9,558.6 455.6,542.7 462.7,548.0 471.5,562.1 480.2,556.8 489.0,556.8 497.8,548.0 508.4,537.5 515.4,542.7 522.4,550.6 529.5,555.9 538.3,559.4 547.0,548.0 554.1,536.6 562.9,527.8 571.7,531.3 582.2,544.5 592.7,550.6 604.0,545.4 612.8,541.9 619.8,549.8 626.9,555.9 635.6,553.3 644.4,546.2 655.0,535.7 665.5,526.9 676.1,514.6 684.9,516.4 693.6,519.0 702.4,517.2 709.5,516.4 718.3,521.6 727.0,514.6 734.1,512.9 736.7,516.4" fill="none" stroke="#ffff00" stroke-width="1" stroke-linejoin="round" /><polyline points="64.0,537.5 71.0,534.8 81.6,532.2 86.9,514.6 92.1,508.5 99.2,512.9 104.4,525.2 111.5,532.2 118.5,539.2 127.3,540.1 134.3,548.0 141.3,557.7 148.4,555.0 157.2,557.7 166.0,552.4 173.0,555.9 180.0,548.0 187.0,535.7 194.1,525.2 202.9,511.1 209.9,509.3 215.2,518.1 222.2,530.4 231.0,529.5 238.0,524.3 244.0,513.7 250.2,511.1 256.3,514.6 261.6,525.2 268.6,535.7 273.9,542.7 280.9,536.6 288.0,530.4 295.0,512.9 300.2,510.2 307.3,512.9 314.3,520.8 317.8,522.5 324.9,520.8 330.1,525.2 333.6,514.6 338.9,508.5 346.0,509.3 349.5,507.6 353.0,498.8 358.3,492.6 363.5,504.1 370.6,512.9 379.3,525.2 384.6,535.7 391.7,546.2 396.9,560.3 402.2,558.6 407.5,569.1 414.5,572.6 419.8,573.5 424.0,565.6 431.0,558.6 438.1,560.3 445.1,557.7 453.0,537.5 457.4,542.7 462.7,556.8 469.7,566.5 476.7,555.0 483.8,551.5 487.3,557.7 494.3,544.5 501.3,535.4 506.6,534.8 513.6,542.7 520.7,557.7 527.7,557.7 533.0,560.3 541.8,555.0 547.0,535.7 550.6,534.0 557.6,532.2 564.6,526.0 571.7,532.2 578.7,546.2 585.7,548.0 592.7,553.3 599.8,545.4 604.0,543.6 611.0,540.1 616.3,549.8 621.6,557.7 626.9,560.3 633.9,552.4 640.9,547.1 648.0,537.5 656.7,534.0 665.5,525.2 670.8,513.7 675.2,509.3 679.6,514.6 686.6,518.1 695.4,522.5 700.7,515.5 705.1,512.0 711.2,519.0 716.5,524.3 723.5,514.6 728.8,511.1 734.1,513.7 736.7,518.1" fill="none" stroke="#ffffff" stroke-width="1" stroke-linejoin="round" /><polyline points="64.5,659.3 66.0,648.9 67.5,647.2 69.0,653.5 70.5,656.8 72.0,661.1 73.5,658.5 75.0,653.3 76.5,647.6 78.0,641.8 79.5,644.7 81.0,643.2 82.5,635.7 84.0,620.9 85.5,620.9 87.0,620.7 88.5,615.0 90.0,615.4 91.5,610.7 93.0,630.2 94.5,628.6 96.0,630.0 97.5,630.2 99.0,637.0 100.5,638.7 102.0,649.5 103.5,662.0 105.0,664.4 106.5,655.6 108.0,659.3 109.5,661.5 111.0,664.8 112.5,669.5 114.0,676.2 115.5,670.4 117.0,660.3 118.5,661.8 120.0,662.8 121.5,655.2 123.0,656.9 124.5,660.4 126.0,664.2 127.5,660.5 129.0,664.7 130.5,669.2 132.0,679.3 133.5,688.5 135.0,687.1 136.5,686.0 138.0,691.5 139.5,693.4 141.0,691.1 142.5,685.6 144.0,681.4 145.5,676.7 147.0,674.5 148.5,674.8 150.0,680.3 151.5,683.1 153.0,688.3 154.5,688.5 156.0,689.0 157.5,679.9 159.0,674.6 160.5,673.4 162.0,673.8 163.5,674.1 165.0,676.5 166.5,679.3 168.0,687.7 169.5,689.0 171.0,693.4 172.5,686.5 174.0,680.7 175.5,677.4 177.0,675.0 178.5,669.2 180.0,659.8 181.5,656.3 183.0,647.8 184.5,645.1 186.0,638.3 187.5,635.1 189.0,647.6 190.5,646.3 192.0,639.1 193.5,631.9 195.0,629.2 196.5,620.7 198.0,615.8 199.5,611.3 201.0,611.7 202.5,612.5 204.0,614.6 205.5,615.2 207.0,612.6 208.5,614.6 210.0,613.2 211.5,623.8 213.0,639.4 214.5,643.6 216.0,646.8 217.5,647.3 219.0,655.4 220.5,658.9 222.0,667.6 223.5,682.3 225.0,673.5 226.5,657.3 228.0,644.4 229.5,639.0 231.0,643.7 232.5,643.4 234.0,642.7 235.5,645.6 237.0,640.0 238.5,635.6 240.0,626.6 241.5,621.4 243.0,624.9 244.5,623.1 246.0,626.5 247.5,627.3 249.0,626.9 250.5,624.7 252.0,628.3 253.5,631.7 255.0,635.8 256.5,640.1 258.0,652.0 259.5,657.1 261.0,663.5 262.5,668.6 264.0,674.2 265.5,673.4 267.0,665.4 268.5,671.0 270.0,668.1 271.5,666.7 273.0,661.4 274.5,659.6 276.0,662.4 277.5,666.0 279.0,657.9 280.5,643.6 282.0,646.5 283.5,643.1 285.0,641.7 286.5,633.9 288.0,626.9 289.5,617.9 291.0,611.6 292.5,612.4 294.0,615.0 295.5,621.5 297.0,615.2 298.5,613.3 300.0,618.8 301.5,621.6 303.0,623.3 304.5,620.4 306.0,624.0 307.5,624.5 309.0,631.5 310.5,640.3 312.0,634.4 313.5,642.6 315.0,647.8 316.5,640.7 318.0,631.7 319.5,624.6 321.0,620.7 322.5,626.5 324.0,636.5 325.5,643.3 327.0,650.1 328.5,651.2 330.0,643.9 331.5,637.4 333.0,616.4 334.5,606.8 336.0,608.5 337.5,613.9 339.0,618.8 340.5,624.8 342.0,623.8 343.5,618.7 345.0,624.2 346.5,628.6 348.0,621.4 349.5,614.2 351.0,603.0 352.5,601.2 354.0,611.8 355.5,607.1 357.0,606.1 358.5,618.6 360.0,627.8 361.5,634.0 363.0,639.4 364.5,636.6 366.0,636.3 367.5,638.8 369.0,635.3 370.5,633.8 372.0,639.7 373.5,645.5 375.0,643.4 376.5,646.0 378.0,650.0 379.5,654.4 381.0,652.6 382.5,650.5 384.0,657.7 385.5,681.1 387.0,682.5 388.5,683.5 390.0,676.0 391.5,684.0 393.0,685.3 394.5,682.7 396.0,678.8 397.5,680.1 399.0,681.3 400.5,671.2 402.0,669.2 403.5,676.5 405.0,688.1 406.5,690.7 408.0,691.0 409.5,690.2 411.0,685.6 412.5,681.6 414.0,688.4 415.5,689.1 417.0,688.3 418.5,679.0 420.0,672.8 421.5,681.3 423.0,676.4 424.5,668.7 426.0,667.2 427.5,666.3 429.0,670.7 430.5,672.7 432.0,677.9 433.5,687.7 435.0,681.0 436.5,676.5 438.0,675.6 439.5,680.5 441.0,680.7 442.5,681.4 444.0,678.5 445.5,682.1 447.0,658.6 448.5,642.6 450.0,639.9 451.5,642.5 453.0,652.9 454.5,653.4 456.0,662.1 457.5,676.2 459.0,675.7 460.5,682.3 462.0,685.6 463.5,685.6 465.0,688.8 466.5,687.9 468.0,687.9 469.5,690.6 471.0,684.9 472.5,678.6 474.0,674.3 475.5,669.3 477.0,667.7 478.5,659.6 480.0,670.1 481.5,671.8 483.0,662.8 484.5,667.2 486.0,684.3 487.5,678.2 489.0,666.9 490.5,658.9 492.0,655.9 493.5,652.2 495.0,655.3 496.5,654.5 498.0,653.4 499.5,649.7 501.0,644.0 502.5,648.9 504.0,654.0 505.5,650.5 507.0,653.1 508.5,664.5 510.0,674.4 511.5,668.9 513.0,666.7 514.5,678.5 516.0,678.6 517.5,680.4 519.0,683.7 520.5,686.0 522.0,683.3 523.5,680.9 525.0,684.4 526.5,684.7 528.0,689.1 529.5,685.2 531.0,673.7 532.5,680.1 534.0,681.9 535.5,679.5 537.0,676.9 538.5,679.5 540.0,679.8 541.5,663.4 543.0,651.3 544.5,640.9 546.0,640.5 547.5,635.9 549.0,628.4 550.5,638.6 552.0,650.8 553.5,655.5 555.0,652.4 556.5,652.8 558.0,653.9 559.5,649.2 561.0,650.7 562.5,644.5 564.0,637.4 565.5,645.9 567.0,653.9 568.5,658.4 570.0,659.7 571.5,660.6 573.0,665.7 574.5,668.8 576.0,671.7 577.5,671.4 579.0,670.0 580.5,666.8 582.0,676.8 583.5,679.0 585.0,671.6 586.5,672.2 588.0,680.9 589.5,683.5 591.0,679.1 592.5,676.3 594.0,672.9 595.5,664.7 597.0,655.6 598.5,653.3 600.0,656.7 601.5,659.4 603.0,660.4 604.5,666.0 606.0,666.5 607.5,665.4 609.0,659.2 610.5,653.2 612.0,656.8 613.5,666.3 615.0,683.6 616.5,693.7 618.0,696.0 619.5,693.9 621.0,695.3 622.5,694.7 624.0,695.2 625.5,690.3 627.0,683.7 628.5,678.3 630.0,673.1 631.5,671.0 633.0,675.0 634.5,677.0 636.0,678.9 637.5,668.7 639.0,656.4 640.5,667.4 642.0,672.1 643.5,658.7 645.0,646.0 646.5,642.4 648.0,640.0 649.5,647.1 651.0,650.7 652.5,657.4 654.0,653.3 655.5,652.1 657.0,642.5 658.5,638.2 660.0,644.7 661.5,635.0 663.0,628.8 664.5,626.6 666.0,626.7 667.5,628.6 669.0,618.4 670.5,616.0 672.0,616.7 673.5,613.5 675.0,616.8 676.5,628.3 678.0,634.6 679.5,645.0 681.0,639.4 682.5,634.8 684.0,637.7 685.5,632.5 687.0,630.3 688.5,626.9 690.0,633.5 691.5,640.1 693.0,644.3 694.5,650.2 696.0,645.3 697.5,641.6 699.0,633.9 700.5,622.1 702.0,616.1 703.5,614.7 705.0,621.4 706.5,632.5 708.0,643.7 709.5,651.6 711.0,647.4 712.5,653.2 714.0,653.0 715.5,645.9 717.0,640.8 718.5,641.2 720.0,627.8 721.5,623.6 723.0,622.8 724.5,619.6 726.0,616.3 727.5,618.6 729.0,625.3 730.5,627.5 732.0,632.6 733.5,631.7 735.0,632.9 736.5,640.1" fill="none" stroke="#ff48d8" stroke-width="1.4" stroke-linejoin="round" /></svg>
<div class="a" style="left:0;top:49px;width:2px;height:667px;background:#c8c8c8" id="leftstrip"></div>
<span class="t" style="left:4px;top:51px;font-size:12px;color:#fff">欧元美元</span><span class="t m w" style="left:52px;top:51px">(EURUSD)&lt;60</span><span class="t" style="left:118px;top:51px;font-size:12px;color:#fff">分</span><span class="t m w" style="left:130px;top:51px">&gt;</span>
<span class="t m g" style="left:65px;top:71px">K</span>
<span class="t m" style="left:85px;top:71px"><span class="g">MA(5,10,20,30,30)</span> <span class="w">MA5:1.3736</span> <span class="y">MA10:1.3745</span> <span class="mg">MA20:1.3721</span> <span class="gr">MA30:1.3710</span>&nbsp;&nbsp; <span class="g">BOLL(30,2)</span> <span class="bl">UPPER:1.3786</span> <span class="or">LOWER:1.3634</span></span>
<div id="status" class="a"></div>
<!-- y axis labels -->
<span class="t m g" style="left:32.0px;top:118px;font-size:13px">1.42</span>
<span class="t m g" style="left:32.0px;top:179px;font-size:13px">1.40</span>
<span class="t m g" style="left:32.0px;top:241px;font-size:13px">1.38</span>
<span class="t m g" style="left:32.0px;top:302px;font-size:13px">1.36</span>
<span class="t m g" style="left:45.0px;top:409px;font-size:13px">70</span>
<span class="t m g" style="left:45.0px;top:429px;font-size:13px">50</span>
<span class="t m g" style="left:45.0px;top:449px;font-size:13px">30</span>
<span class="t m g" style="left:51.5px;top:528px;font-size:13px">0</span>
<span class="t m g" style="left:45.0px;top:612px;font-size:13px">70</span>
<span class="t m g" style="left:45.0px;top:647px;font-size:13px">50</span>
<span class="t m g" style="left:45.0px;top:683px;font-size:13px">30</span>
<span class="t m g" style="left:65px;top:380px">BHU</span><span class="t w" style="left:87px;top:377px;font-size:13px">股</span><span class="t m w" style="left:100px;top:380px">:83.0872</span>
<span class="t m" style="left:65px;top:479px"><span class="g">MACD(26,12,9)</span> <span class="w">DIFF:0.1968</span> <span class="y">DEA:0.2394</span> <span class="g">MACD:-0.0852</span></span>
<span class="t m" style="left:65px;top:581px"><span class="g">RSI(14,14,14)</span> <span class="w">RSI1:51.9438</span> <span class="y">RSI2:51.9438</span> <span class="mg">RSI3:51.9438</span></span>
<!-- fib labels -->
<span class="t m w" style="left:301px;top:93px;font-size:13px">1.4281</span><svg class="a" style="left:343px;top:94px" width="14" height="9"><path d="M1,4.5 H12" stroke="#a0a0a0" stroke-dasharray="1,1"/><path d="M8,1 L12,4.5 L8,8" fill="none" stroke="#a0a0a0"/></svg>
<span class="t m w" style="left:562px;top:349px;font-size:13px">1.3449</span><svg class="a" style="left:604px;top:350px" width="14" height="9"><path d="M1,4.5 H12" stroke="#a0a0a0" stroke-dasharray="1,1"/><path d="M8,1 L12,4.5 L8,8" fill="none" stroke="#a0a0a0"/></svg>
<span class="t" style="left:752px;top:197px;font-size:11px;color:#d0d0d0">1.3965</span>
<span class="t" style="left:752px;top:228px;font-size:11px;color:#d0d0d0">1.3868</span>
<span class="t" style="left:752px;top:258px;font-size:11px;color:#d0d0d0">1.3771</span>
<span class="t" style="left:64px;top:196px;font-size:11px;color:#d0d0d0">61.8%</span>
<span class="t" style="left:64px;top:227px;font-size:11px;color:#d0d0d0">50%</span>
<span class="t" style="left:64px;top:257px;font-size:11px;color:#d0d0d0">38.2%</span>
<!-- arrow buttons -->
<svg class="a" style="left:754px;top:51px" width="34" height="15">
<rect x="0.5" y="0.5" width="15" height="13" fill="none" stroke="#50b0ff"/>
<rect x="17.5" y="0.5" width="15" height="13" fill="none" stroke="#50b0ff"/>
<polyline points="7,3 3,7 7,11 7,9 12,9 12,5 7,5 7,3" fill="none" stroke="#50b0ff"/>
<polyline points="26,3 30,7 26,11 26,9 21,9 21,5 26,5 26,3" fill="none" stroke="#50b0ff"/>
</svg>
<!-- RSI selection box -->
<div class="a" style="left:2px;top:578px;width:61px;height:122px;border:1px solid #c0c0c0;border-right-color:#c0c0c0"></div>
<!-- white note box -->
<div class="a" style="left:591px;top:100px;width:186px;height:90px;background:#fff"></div>
<div class="t" style="left:592px;top:100px;font-size:16px;line-height:16.3px;color:#ff0000;font-weight:bold;letter-spacing:0.8px">这波上行从强度来看，<br>应该是一波调整。目前<br>调整幅度已经达到<span style="font-weight:normal;font-family:'Liberation Mono';font-size:14px;letter-spacing:0">0.382</span><br>位置，回调结束了吗？</div>
<!-- date axis -->
<span class="t" style="left:35px;top:702px;font-size:12px;color:#f0f0f0">60分</span>
<span class="t" style="left:65px;top:704px;font-size:11px;color:#f0f0f0">1022</span>
<span class="t" style="left:160px;top:704px;font-size:11px;color:#f0f0f0">28</span>
<span class="t" style="left:227px;top:704px;font-size:11px;color:#f0f0f0">1101</span>
<span class="t" style="left:320px;top:704px;font-size:11px;color:#f0f0f0">04</span>
<span class="t" style="left:393px;top:704px;font-size:11px;color:#f0f0f0">08</span>
<span class="t" style="left:480px;top:704px;font-size:11px;color:#f0f0f0">11</span>
<span class="t" style="left:553px;top:704px;font-size:11px;color:#f0f0f0">15</span>
<span class="t" style="left:640px;top:704px;font-size:11px;color:#f0f0f0">18</span>
<span class="t" style="left:712px;top:704px;font-size:11px;color:#f0f0f0">22</span>
<!-- status bar -->
<div class="a" style="left:0;top:716px;width:1024px;height:2px;background:#c4c4c4"></div><div class="a" style="left:0;top:733px;width:1024px;height:1px;background:#607090"></div>
<span class="t" style="left:2px;top:719px;font-size:13px;color:#0000ff;font-weight:bold">沪</span>
<span class="t" style="left:25px;top:720px;font-size:12px;color:#008000;font-weight:bold">2884.37</span>
<span class="t" style="left:93px;top:720px;font-size:12px;color:#008000;font-weight:bold">-4.20</span>
<span class="t" style="left:124px;top:720px;font-size:12px;color:#000;font-weight:bold">1652.1亿</span>
<span class="t" style="left:189px;top:719px;font-size:13px;color:#0000ff;font-weight:bold">深</span>
<span class="t" style="left:207px;top:720px;font-size:12px;color:#ff0000;font-weight:bold">12303.54</span>
<span class="t" style="left:285px;top:720px;font-size:12px;color:#ff0000;font-weight:bold">7.70</span>
<span class="t" style="left:313px;top:720px;font-size:12px;color:#000;font-weight:bold">1659.9亿</span>
<div class="a" style="left:368px;top:718px;width:1px;height:16px;background:#808080"></div>
<span class="t" style="left:370px;top:720px;font-size:12px;color:#000">K现天然气年产量300亿立方米</span>

<div class="a" style="left:789px;top:49px;width:232px;height:667px;background:#000"></div><div class="a" style="left:1021px;top:49px;width:1px;height:667px;background:#b0b0b0"></div><svg class="a" style="left:788px;top:48px" width="236" height="668"><line x1="0.5" y1="1" x2="0.5" y2="668" stroke="#e00000"/><g stroke="#b00000" stroke-width="1"><line x1="1" y1="24.5" x2="233" y2="24.5"/><line x1="1" y1="45.5" x2="233" y2="45.5"/><line x1="1" y1="66.5" x2="233" y2="66.5"/><line x1="1" y1="187.5" x2="233" y2="187.5"/><line x1="1" y1="207.5" x2="233" y2="207.5"/><line x1="1" y1="228.5" x2="233" y2="228.5"/></g><rect x="216.5" y="2.5" width="15" height="13" fill="none" stroke="#58a8ff"/><rect x="219.5" y="4.5" width="9" height="8" fill="none" stroke="#58a8ff"/></svg><span class="t" style="left:825px;top:51px;font-size:18px;color:#e0e020;font-family:'Liberation Serif',serif">欧元美元(EURUSD)</span><span class="t" style="left:794px;top:76.3px;font-size:13px;color:#e8e8e8">卖出</span><span class="t" style="right:131px;top:76.2px;font-size:14px;color:#ff4848;letter-spacing:-1px">1.3720</span><span class="t" style="right:8px;top:76.2px;font-size:14px;color:#ffff00;letter-spacing:-1px">0</span><span class="t" style="left:794px;top:97.0px;font-size:13px;color:#e8e8e8">买入</span><span class="t" style="right:131px;top:96.9px;font-size:14px;color:#ff4848;letter-spacing:-1px">1.3719</span><span class="t" style="right:8px;top:96.9px;font-size:14px;color:#ffff00;letter-spacing:-1px">0</span><span class="t" style="left:794px;top:118.0px;font-size:13px;color:#e8e8e8">最新</span><span class="t" style="right:131px;top:117.9px;font-size:14px;color:#ff4848;letter-spacing:-1px">1.3719</span><span class="t" style="left:914px;top:118.0px;font-size:13px;color:#e8e8e8">均价</span><span class="t" style="right:8px;top:117.9px;font-size:14px;color:#e8e8e8;letter-spacing:-1px">0.0000</span><span class="t" style="left:794px;top:138.2px;font-size:13px;color:#e8e8e8">涨跌</span><span class="t" style="right:131px;top:138.1px;font-size:14px;color:#ff4848;letter-spacing:-1px">0.0047</span><span class="t" style="left:914px;top:138.2px;font-size:13px;color:#e8e8e8">昨收</span><span class="t" style="right:8px;top:138.1px;font-size:14px;color:#e8e8e8;letter-spacing:-1px">1.3672</span><span class="t" style="left:794px;top:158.5px;font-size:13px;color:#e8e8e8">幅度</span><span class="t" style="right:131px;top:158.4px;font-size:14px;color:#ff4848;letter-spacing:-1px">0.34%</span><span class="t" style="left:914px;top:158.5px;font-size:13px;color:#e8e8e8">开盘</span><span class="t" style="right:8px;top:158.4px;font-size:14px;color:#ff4848;letter-spacing:-1px">1.3717</span><span class="t" style="left:794px;top:178.5px;font-size:13px;color:#e8e8e8">总手</span><span class="t" style="right:131px;top:178.4px;font-size:14px;color:#ffff00;letter-spacing:-1px">0</span><span class="t" style="left:914px;top:178.5px;font-size:13px;color:#e8e8e8">最高</span><span class="t" style="right:8px;top:178.4px;font-size:14px;color:#ff4848;letter-spacing:-1px">1.3785</span><span class="t" style="left:794px;top:198.5px;font-size:13px;color:#e8e8e8">现手</span><span class="t" style="right:131px;top:198.4px;font-size:14px;color:#ffff00;letter-spacing:-1px">0</span><span class="t" style="left:914px;top:198.5px;font-size:13px;color:#e8e8e8">最低</span><span class="t" style="right:8px;top:198.4px;font-size:14px;color:#ff4848;letter-spacing:-1px">1.3710</span><span class="t" style="left:794px;top:218.5px;font-size:13px;color:#e8e8e8">金额</span><span class="t" style="right:131px;top:218.4px;font-size:14px;color:#ffff00;letter-spacing:-1px">0.00</span><span class="t" style="left:914px;top:218.5px;font-size:13px;color:#e8e8e8">量比</span><span class="t" style="right:8px;top:218.4px;font-size:14px;color:#e8e8e8;letter-spacing:-1px">1.000</span><span class="t" style="left:794px;top:239.0px;font-size:13px;color:#e8e8e8">委比</span><span class="t" style="right:131px;top:238.9px;font-size:14px;color:#e8e8e8;letter-spacing:-1px">---</span><span class="t" style="right:8px;top:238.9px;font-size:14px;color:#e8e8e8;letter-spacing:-1px">0</span><span class="t" style="left:794px;top:259.5px;font-size:13px;color:#e8e8e8">外盘</span><span class="t" style="right:131px;top:259.4px;font-size:14px;color:#ff4848;letter-spacing:-1px">---</span><span class="t" style="left:914px;top:259.5px;font-size:13px;color:#e8e8e8">内盘</span><span class="t" style="right:8px;top:259.4px;font-size:14px;color:#00ff00;letter-spacing:-1px">---</span><span class="t" style="left:794px;top:281.5px;font-size:13px;color:#c0c0c0">时间</span><span class="t" style="left:891px;top:281.5px;font-size:13px;color:#c0c0c0">价格</span><span class="t" style="left:974px;top:281.5px;font-size:13px;color:#c0c0c0">现手</span><span class="t" style="left:794px;top:304.2px;font-size:14px;color:#e8e8e8;letter-spacing:-1px">19:42</span><span class="t" style="right:109px;top:304.2px;font-size:14px;color:#ff4848;letter-spacing:-1px">1.3720</span><span class="t" style="right:25px;top:304.2px;font-size:14px;color:#ff4848;letter-spacing:-1px">0</span><span class="t" style="left:794px;top:326.2px;font-size:14px;color:#e8e8e8;letter-spacing:-1px">19:42</span><span class="t" style="right:109px;top:326.2px;font-size:14px;color:#ff4848;letter-spacing:-1px">1.3721</span><span class="t" style="right:25px;top:326.2px;font-size:14px;color:#ff4848;letter-spacing:-1px">0</span><span class="t" style="left:794px;top:348.2px;font-size:14px;color:#e8e8e8;letter-spacing:-1px">19:42</span><span class="t" style="right:109px;top:348.2px;font-size:14px;color:#ff4848;letter-spacing:-1px">1.3720</span><span class="t" style="right:25px;top:348.2px;font-size:14px;color:#ff4848;letter-spacing:-1px">0</span><span class="t" style="left:794px;top:370.2px;font-size:14px;color:#e8e8e8;letter-spacing:-1px">19:42</span><span class="t" style="right:109px;top:370.2px;font-size:14px;color:#ff4848;letter-spacing:-1px">1.3721</span><span class="t" style="right:25px;top:370.2px;font-size:14px;color:#ff4848;letter-spacing:-1px">0</span><span class="t" style="left:794px;top:392.2px;font-size:14px;color:#e8e8e8;letter-spacing:-1px">19:42</span><span class="t" style="right:109px;top:392.2px;font-size:14px;color:#ff4848;letter-spacing:-1px">1.3720</span><span class="t" style="right:25px;top:392.2px;font-size:14px;color:#ff4848;letter-spacing:-1px">0</span><span class="t" style="left:794px;top:414.2px;font-size:14px;color:#e8e8e8;letter-spacing:-1px">19:42</span><span class="t" style="right:109px;top:414.2px;font-size:14px;color:#ff4848;letter-spacing:-1px">1.3721</span><span class="t" style="right:25px;top:414.2px;font-size:14px;color:#ff4848;letter-spacing:-1px">0</span><span class="t" style="left:794px;top:436.2px;font-size:14px;color:#e8e8e8;letter-spacing:-1px">19:42</span><span class="t" style="right:109px;top:436.2px;font-size:14px;color:#ff4848;letter-spacing:-1px">1.3720</span><span class="t" style="right:25px;top:436.2px;font-size:14px;color:#ff4848;letter-spacing:-1px">0</span><span class="t" style="left:794px;top:458.2px;font-size:14px;color:#e8e8e8;letter-spacing:-1px">19:42</span><span class="t" style="right:109px;top:458.2px;font-size:14px;color:#ff4848;letter-spacing:-1px">1.3721</span><span class="t" style="right:25px;top:458.2px;font-size:14px;color:#ff4848;letter-spacing:-1px">0</span><span class="t" style="left:794px;top:480.2px;font-size:14px;color:#e8e8e8;letter-spacing:-1px">19:42</span><span class="t" style="right:109px;top:480.2px;font-size:14px;color:#ff4848;letter-spacing:-1px">1.3720</span><span class="t" style="right:25px;top:480.2px;font-size:14px;color:#ff4848;letter-spacing:-1px">0</span><span class="t" style="left:794px;top:502.2px;font-size:14px;color:#e8e8e8;letter-spacing:-1px">19:42</span><span class="t" style="right:109px;top:502.2px;font-size:14px;color:#ff4848;letter-spacing:-1px">1.3721</span><span class="t" style="right:25px;top:502.2px;font-size:14px;color:#ff4848;letter-spacing:-1px">0</span><span class="t" style="left:794px;top:524.2px;font-size:14px;color:#e8e8e8;letter-spacing:-1px">19:42</span><span class="t" style="right:109px;top:524.2px;font-size:14px;color:#ff4848;letter-spacing:-1px">1.3720</span><span class="t" style="right:25px;top:524.2px;font-size:14px;color:#ff4848;letter-spacing:-1px">0</span><span class="t" style="left:794px;top:546.2px;font-size:14px;color:#e8e8e8;letter-spacing:-1px">19:42</span><span class="t" style="right:109px;top:546.2px;font-size:14px;color:#ff4848;letter-spacing:-1px">1.3721</span><span class="t" style="right:25px;top:546.2px;font-size:14px;color:#ff4848;letter-spacing:-1px">0</span><span class="t" style="left:794px;top:568.2px;font-size:14px;color:#e8e8e8;letter-spacing:-1px">19:42</span><span class="t" style="right:109px;top:568.2px;font-size:14px;color:#ff4848;letter-spacing:-1px">1.3720</span><span class="t" style="right:25px;top:568.2px;font-size:14px;color:#ff4848;letter-spacing:-1px">0</span><span class="t" style="left:794px;top:590.2px;font-size:14px;color:#e8e8e8;letter-spacing:-1px">19:42</span><span class="t" style="right:109px;top:590.2px;font-size:14px;color:#ff4848;letter-spacing:-1px">1.3719</span><span class="t" style="right:25px;top:590.2px;font-size:14px;color:#ff4848;letter-spacing:-1px">0</span><span class="t" style="left:794px;top:612.2px;font-size:14px;color:#e8e8e8;letter-spacing:-1px">19:42</span><span class="t" style="right:109px;top:612.2px;font-size:14px;color:#ff4848;letter-spacing:-1px">1.3720</span><span class="t" style="right:25px;top:612.2px;font-size:14px;color:#ff4848;letter-spacing:-1px">0</span><span class="t" style="left:794px;top:634.2px;font-size:14px;color:#e8e8e8;letter-spacing:-1px">19:42</span><span class="t" style="right:109px;top:634.2px;font-size:14px;color:#ff4848;letter-spacing:-1px">1.3719</span><span class="t" style="right:25px;top:634.2px;font-size:14px;color:#ff4848;letter-spacing:-1px">0</span><span class="t" style="left:794px;top:656.2px;font-size:14px;color:#e8e8e8;letter-spacing:-1px">19:42</span><span class="t" style="right:109px;top:656.2px;font-size:14px;color:#ff4848;letter-spacing:-1px">1.3720</span><span class="t" style="right:25px;top:656.2px;font-size:14px;color:#ff4848;letter-spacing:-1px">0</span><span class="t" style="left:794px;top:678.2px;font-size:14px;color:#e8e8e8;letter-spacing:-1px">19:42</span><span class="t" style="right:109px;top:678.2px;font-size:14px;color:#ff4848;letter-spacing:-1px">1.3719</span><span class="t" style="right:25px;top:678.2px;font-size:14px;color:#ff4848;letter-spacing:-1px">0</span><div class="a" style="left:1004px;top:278px;width:17px;height:417px;background:#eef0fa"></div><div class="a" style="left:1005px;top:279px;width:15px;height:15px;background:#c4d0f4;border:1px solid #a8b8e8;border-radius:2px"></div><svg class="a" style="left:1005px;top:279px" width="15" height="15"><polyline points="4,9 7.5,5.5 11,9" fill="none" stroke="#4d6185" stroke-width="2"/></svg><div class="a" style="left:1005px;top:663px;width:15px;height:15px;background:#c4d0f4;border:1px solid #a8b8e8;border-radius:2px"></div><svg class="a" style="left:1005px;top:663px" width="15" height="15"><g stroke="#6b80b8"><line x1="4" y1="4.5" x2="11" y2="4.5"/><line x1="4" y1="6.5" x2="11" y2="6.5"/><line x1="4" y1="8.5" x2="11" y2="8.5"/><line x1="4" y1="10.5" x2="11" y2="10.5"/></g></svg><div class="a" style="left:1005px;top:679px;width:15px;height:15px;background:#c4d0f4;border:1px solid #a8b8e8;border-radius:2px"></div><svg class="a" style="left:1005px;top:679px" width="15" height="15"><polyline points="4,6 7.5,9.5 11,6" fill="none" stroke="#4d6185" stroke-width="2"/></svg>
<!-- drawing panel -->
<div class="a" style="left:800px;top:267px;width:83px;height:281px;background:#6c78e4"></div>
<div class="a" style="left:803px;top:270px;width:77px;height:18px;background:#8c9ee0"></div>
<div class="a" style="left:803px;top:288px;width:77px;height:257px;background:#f2eeda"></div>
<span class="t" style="left:803px;top:272px;font-size:13px;color:#fff;font-weight:bold">画线</span>
<div class="a" style="left:866px;top:273px;width:12px;height:12px;background:#b86a8a;border:1px solid #e0c8e0"></div>
<svg class="a" style="left:866px;top:273px" width="12" height="12"><path d="M3,3 L9,9 M9,3 L3,9" stroke="#fff" stroke-width="2"/></svg>
<svg class="a" style="left:803px;top:288px" width="77" height="257" viewBox="803 288 77 257">
<g stroke="#000" stroke-width="1" fill="none">
<!-- row1 y~300 -->
<line x1="810" y1="295" x2="822" y2="307"/>
<line x1="837" y1="296" x2="847" y2="306"/>
<circle cx="837" cy="296" r="1.2" fill="#000"/><circle cx="847" cy="306" r="1.2" fill="#000"/>
<line x1="862" y1="298" x2="871" y2="307"/><line x1="866" y1="295" x2="874" y2="303"/>
<!-- row2 y~326 -->
<line x1="810" y1="326.5" x2="822" y2="326.5"/><line x1="810.5" y1="324" x2="810.5" y2="329"/>
<line x1="841.5" y1="320" x2="841.5" y2="333"/><line x1="839" y1="320.5" x2="844" y2="320.5"/>
<rect x="863.5" y="322.5" width="9" height="8"/>
<!-- row3 y~352 -->
<line x1="811" y1="358" x2="821" y2="347"/><circle cx="811" cy="358" r="1.2" fill="#000"/>
<line x1="837" y1="347" x2="847" y2="358"/><circle cx="837" cy="347" r="1.2" fill="#000"/>
<path d="M863,352 C864,344 868,345 868,352 C868,359 872,360 873,352"/>
<!-- row4 y~378 -->
<path d="M811,373 L816,373 C822,373 822,384 816,384 L811,384"/>
<path d="M837,384 L848,373 M837,384 L848,384" />
<path d="M837,384 L848,378" stroke="#0040c0"/>
<path d="M863,373 L863,384 L874,384 M863,384 L874,373" />
<path d="M863,384 L872,375 M863,384 L874,377 M863,384 L874,380 M863,384 L868,373" stroke="#0040c0"/>
</g>
<!-- row5 y~404: fib icons -->
<g fill="#2050b0">
<rect x="808" y="398" width="15" height="1.5"/><rect x="808" y="401" width="15" height="1.5"/><rect x="808" y="404" width="15" height="1.5"/><rect x="808" y="407" width="15" height="1.5"/><rect x="808" y="410" width="15" height="1.5"/>
<rect x="834" y="398" width="15" height="1.5"/><rect x="834" y="401" width="15" height="1.5"/><rect x="834" y="404" width="15" height="1.5"/><rect x="834" y="407" width="15" height="1.5"/><rect x="834" y="410" width="15" height="1.5"/>
<rect x="860" y="398" width="15" height="1.5"/><rect x="860" y="401" width="15" height="1.5"/><rect x="860" y="404" width="15" height="1.5"/><rect x="860" y="407" width="15" height="1.5"/><rect x="860" y="410" width="15" height="1.5"/>
</g>
<g fill="#2050b0">
<!-- row6 y~430 vertical bars -->
<rect x="809" y="424" width="1.5" height="13"/><rect x="813" y="424" width="1.5" height="13"/><rect x="817" y="424" width="1.5" height="13"/><rect x="821" y="424" width="1.5" height="13"/>
<rect x="835" y="424" width="1.5" height="13"/><rect x="838" y="424" width="1.5" height="13"/><rect x="841" y="424" width="1.5" height="13"/><rect x="844" y="424" width="1.5" height="13"/><rect x="847" y="424" width="1.5" height="13"/>
</g>
<g stroke="#102060" fill="none">
<path d="M862,424 L862,437 M873,424 L873,437 M862,430 L873,425 M862,434 L873,429 M862,437 L873,433"/>
<!-- row7 y~456 -->
<path d="M810,450 L810,463 M820,450 L820,463 M808,458 L823,453 M808,462 L823,457"/>
</g>
<text x="842" y="463" font-size="15" font-family="Liberation Sans" text-anchor="middle" fill="#102040">A</text>
<circle cx="868" cy="456" r="6.5" fill="#c0c8e0" stroke="#4060a0"/>
<circle cx="868" cy="456" r="3.5" fill="#e0e0f0" stroke="#e04040" stroke-dasharray="1,1"/>
<!-- row8 y~482 arrows red -->
<path d="M811,482 L816,476 L821,482 L818,482 L818,488 L814,488 L814,482 Z" fill="#e83010" stroke="#a02000" stroke-width="0.5"/>
<path d="M836,489 L844,481 L841,478 L849,476 L847,484 L844,482 L838,491 Z" fill="#e82020" stroke="#a00000" stroke-width="0.5"/>
<path d="M872,489 L865,481 L868,478 L860,476 L862,484 L865,482 L871,491 Z" fill="#e82020" stroke="#a00000" stroke-width="0.5"/>
<!-- row9 y~508 arrows green -->
<path d="M811,508 L816,514 L821,508 L818,508 L818,502 L814,502 L814,508 Z" fill="#40a020" stroke="#206000" stroke-width="0.5"/>
<path d="M836,502 L844,510 L841,513 L849,515 L847,507 L844,509 L838,500 Z" fill="#40a020" stroke="#206000" stroke-width="0.5"/>
<path d="M872,502 L865,510 L868,513 L860,515 L862,507 L865,509 L871,500 Z" fill="#40a020" stroke="#206000" stroke-width="0.5"/>
<!-- row10 y~534 -->
<path d="M809,538 L817,530 L823,531 L816,539 Z" fill="#f0d020" stroke="#604000" stroke-width="0.8"/>
<rect x="809" y="539" width="9" height="1.5" fill="#606060"/>
<rect x="845" y="529" width="6" height="2" fill="#2060c0"/><rect x="847" y="535" width="6" height="2" fill="#e02020"/>
<rect x="854" y="528" width="3" height="1.5" fill="#000"/><rect x="854" y="531" width="3" height="1.5" fill="#000"/><rect x="854" y="534" width="3" height="1.5" fill="#e02020"/><rect x="854" y="537" width="3" height="1.5" fill="#000"/>
</svg>

<div class="a" style="left:870px;top:713px;width:152px;height:21px;background:#dde6f6;border:1px solid #a8bce0;border-radius:3px"></div>
<svg class="a" style="left:876px;top:717px" width="12" height="14"><path d="M6,2 V11 M2,7 L6,11 L10,7" fill="none" stroke="#f0a000" stroke-width="2"/></svg>
<span class="t" style="left:911px;top:720px;font-size:10px;color:#000">0KB/S</span>
<div class="a" style="left:946px;top:716px;width:1px;height:16px;background:#b0c0d8"></div>
<svg class="a" style="left:950px;top:717px" width="12" height="14"><path d="M6,12 V3 M2,7 L6,3 L10,7" fill="none" stroke="#00b000" stroke-width="2"/></svg>
<span class="t" style="left:985px;top:720px;font-size:10px;color:#000">0KB/S</span>

</body></html>
